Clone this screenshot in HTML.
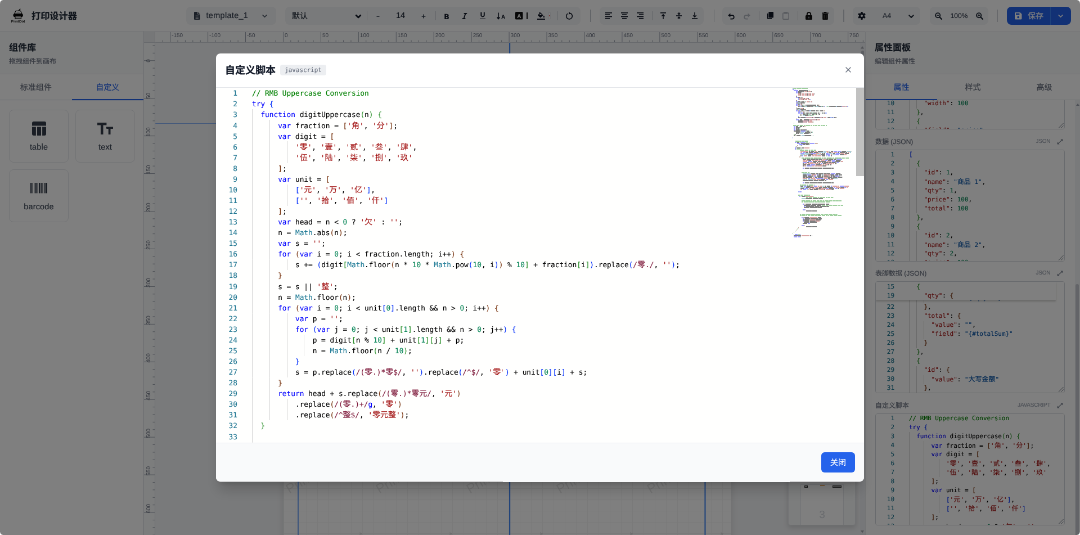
<!DOCTYPE html><html lang="zh-CN"><head><meta charset="utf-8"><title>打印设计器</title><style>
*{box-sizing:border-box;margin:0;padding:0}
html,body{width:1080px;height:535px;overflow:hidden;background:#fff}
body{font-family:"Liberation Sans","Noto Sans CJK SC",sans-serif;color:#1f2937;-webkit-text-stroke:.2px;text-rendering:geometricPrecision}
#root{will-change:transform;position:absolute;left:0;top:0;width:1920px;height:951px;transform:scale(.5625);transform-origin:0 0;overflow:hidden;border-radius:6.5px;background:#fff}
.abs{position:absolute}
.c{position:absolute;display:flex;align-items:center;justify-content:center;white-space:nowrap}
.l{position:absolute;display:flex;align-items:center;white-space:nowrap}
header{position:absolute;left:0;top:0;width:1920px;height:56px;background:#fff;border-bottom:1px solid #e5e7eb}
.pill{position:absolute;top:12px;height:32px;background:#f3f4f6;border-radius:8px}
.sep{position:absolute;width:1px;background:#d1d5db}
.ic{position:absolute;display:block;overflow:visible}
#left{position:absolute;left:0;top:56px;width:256px;height:895px;background:#fff;border-right:1px solid #e5e7eb}
#right{position:absolute;left:1538px;top:56px;width:382px;height:895px;background:#fff;border-left:1px solid #e5e7eb;overflow:hidden}
.ph{position:absolute;left:0;top:0;right:0;height:76px;background:#f9fafb;border-bottom:1px solid #e5e7eb}
.ph h2{position:absolute;left:16px;top:18px;font-size:16px;line-height:24px;font-weight:700;color:#1f2937}
.ph p{position:absolute;left:16px;top:45px;font-size:12px;line-height:16px;color:#6b7280}
.tabs{position:absolute;left:0;right:0;top:76px;height:46px;border-bottom:1px solid #e5e7eb;display:flex}
.tabs div{flex:1;display:flex;align-items:center;justify-content:center;font-size:14px;color:#6b7280;border-bottom:2px solid transparent;margin-bottom:-1px;padding-top:1px}
.tabs div.on{color:#2563eb;border-bottom-color:#2563eb}
.card{position:absolute;width:106px;height:94px;border:1px solid #e5e7eb;border-radius:8px;background:#fff}
.card span{position:absolute;left:0;right:0;text-align:center;font-size:14.4px;letter-spacing:.2px;line-height:20px;color:#414b5a}
#canvas{position:absolute;left:256px;top:56px;width:1282px;height:895px;background:#f3f4f6;overflow:hidden}
.ed{-webkit-text-stroke:.16px;position:absolute;background:#fffffe;overflow:hidden;font-family:"DejaVu Sans Mono","Noto Sans CJK SC",monospace;color:#000}
.ed .ln{position:absolute;left:0;white-space:pre}
.ed .no{position:absolute;text-align:right;color:#237893;white-space:pre}
.ed b{font-weight:400}
.big{font-size:12.79px}
.big .ln,.big .no{height:19px;line-height:19px}
.big b{font-size:14px;line-height:19px}
.sm{font-size:10.96px}
.sm .ln,.sm .no{height:16px;line-height:16px}
.sm b{font-size:12px;line-height:16px}
.g{position:absolute;width:1px;background:#d3d3d3}
.box{position:absolute;left:17px;width:337px;height:198.5px;border:1px solid #d1d5db;border-radius:4px;overflow:hidden;background:#fff}
.lab{position:absolute;left:17px;font-size:12px;line-height:16px;color:#6b7280;white-space:nowrap}
.lang{position:absolute;font-size:10px;line-height:16px;color:#9ca3af;text-align:right;white-space:nowrap;letter-spacing:-.2px}
</style></head><body><div id="root">
<header>
<svg class="ic" style="left:16.0px;top:12.0px" width="32" height="32" viewBox="0 0 32 32" >
<path d="M16.6 8 L19.8 4" stroke="#111" stroke-width="1.5" stroke-linecap="round"/>
<path d="M11.9 7.4 H20.6 L23 12.6 H9.6Z" fill="#fff" stroke="#111" stroke-width="1.15" stroke-linejoin="round"/>
<path d="M13.6 10 H18.8" stroke="#999" stroke-width="1"/>
<rect x="7.5" y="12.2" width="17.4" height="5.8" rx="2.8" fill="#0a0a0a"/>
<rect x="10.9" y="16.6" width="10.6" height="4.6" fill="#ccc" stroke="#111" stroke-width="1.2"/>
<text x="16" y="27.8" font-size="6.3" font-weight="700" text-anchor="middle" font-family="Liberation Sans,sans-serif" fill="#111" textLength="24.5" lengthAdjust="spacingAndGlyphs">PrintDot</text>
</svg>
<div class="l" style="left:56px;top:12.5px;height:28px;font-size:16.2px;font-weight:700;color:#1f2937;letter-spacing:0">打印设计器</div>
<div class="pill" style="left:330.5px;width:160.0px"></div>
<div class="pill" style="left:507.0px;width:524.6px"></div>
<div class="pill" style="left:1065.8px;width:185.3px"></div>
<div class="pill" style="left:1284.4px;width:198.7px"></div>
<div class="pill" style="left:1516.3px;width:120.0px"></div>
<div class="pill" style="left:1653.0px;width:103.8px"></div>
<div class="sep" style="left:1049.3px;top:17px;height:22px;width:1.4px;background:#c6cad1"></div>
<div class="sep" style="left:1268.7px;top:17px;height:22px;width:1.4px;background:#c6cad1"></div>
<div class="sep" style="left:1499.4px;top:17px;height:22px;width:1.4px;background:#c6cad1"></div>
<div class="sep" style="left:1772.8px;top:17px;height:22px;width:1.4px;background:#c6cad1"></div>
<div class="sep" style="left:651.8px;top:20px;height:16px;width:1.3px;background:#c9cdd4"></div>
<div class="sep" style="left:773.6px;top:20px;height:16px;width:1.3px;background:#c9cdd4"></div>
<div class="sep" style="left:990.5px;top:20px;height:16px;width:1.3px;background:#c9cdd4"></div>
<div class="sep" style="left:1158.5px;top:20px;height:16px;width:1.3px;background:#c9cdd4"></div>
<div class="sep" style="left:1348.8px;top:20px;height:16px;width:1.3px;background:#c9cdd4"></div>
<div class="sep" style="left:1417.6px;top:20px;height:16px;width:1.3px;background:#c9cdd4"></div>
<svg class="ic" style="left:344.9px;top:21.0px" width="10.5" height="14" viewBox="0 0 10.5 14" ><path d="M1.3 0 H6.4 L10.5 4.1 V12.7 A1.3 1.3 0 0 1 9.2 14 H1.3 A1.3 1.3 0 0 1 0 12.7 V1.3 A1.3 1.3 0 0 1 1.3 0Z" fill="#374151"/><path d="M6.4 0 V4.1 H10.5" fill="none" stroke="#f3f4f6" stroke-width=".9"/><path d="M2.6 7.2 H7.9 M2.6 9.4 H7.9 M2.6 11.5 H7.9" stroke="#f3f4f6" stroke-width=".9"/></svg>
<div class="l" style="left:366.5px;top:12px;height:32px;font-size:14.4px;letter-spacing:.35px;color:#374151">template_1</div>
<svg class="ic" style="left:466.1px;top:24.0px" width="9" height="9" viewBox="0 0 8 8" ><path d="M1 2.6 L4 5.6 L7 2.6" fill="none" stroke="#4b5563" stroke-width="1.4" stroke-linecap="round" stroke-linejoin="round"/></svg>
<div class="l" style="left:519px;top:12px;height:32px;font-size:14px;color:#1f2937">默认</div>
<svg class="ic" style="left:631.8px;top:23.5px" width="10" height="10" viewBox="0 0 8 8" ><path d="M1 2.6 L4 5.6 L7 2.6" fill="none" stroke="#111827" stroke-width="2.2" stroke-linecap="round" stroke-linejoin="round"/></svg>
<svg class="ic" style="left:669.4px;top:28.0px" width="6" height="2" viewBox="0 0 6 2" ><rect width="5" height="1.7" x=".5" fill="#374151"/></svg>
<div class="c" style="left:692px;width:40px;top:12px;height:32px;font-size:14.5px;color:#1f2937">14</div>
<svg class="ic" style="left:749.1px;top:24.5px" width="8" height="8" viewBox="0 0 8 8" ><path d="M4 .6 V7.4 M.6 4 H7.4" stroke="#374151" stroke-width="1.6"/></svg>
<div class="c" style="left:784px;width:20px;top:13.2px;height:32px;font-size:12.5px;font-weight:700;color:#111827;font-family:'DejaVu Sans',sans-serif">B</div>
<svg class="ic" style="left:820.6px;top:22.5px" width="10" height="11" viewBox="0 0 10 11" ><path d="M3.6 .9 H9.2 M.8 10.1 H6.4 M6.5 .9 L3.5 10.1" fill="none" stroke="#111827" stroke-width="1.8"/></svg>
<div class="c" style="left:848px;width:20px;top:11px;height:32px;font-size:12px;font-weight:700;color:#111827"><span style="border-bottom:1.6px solid #111827;line-height:11px;padding:0 .5px 1px">U</span></div>
<svg class="ic" style="left:882.5px;top:21.5px" width="16" height="13" viewBox="0 0 16 13" ><path d="M3 0.6 V11.4 M0.6 8.4 L3 11.7 L5.4 8.4" fill="none" stroke="#111827" stroke-width="1.6" stroke-linejoin="round"/><text x="11.6" y="10.6" font-size="9.3" font-weight="700" text-anchor="middle" font-family="Liberation Sans,sans-serif" fill="#111827" stroke="#111827" stroke-width=".3">A</text></svg>
<svg class="ic" style="left:916.2px;top:21.2px" width="13.5" height="13.5" viewBox="0 0 13.5 13.5" ><rect width="13.5" height="13.5" rx="1.6" fill="#111"/><text x="6.75" y="10.6" font-size="10" font-weight="700" text-anchor="middle" font-family="Liberation Sans,sans-serif" fill="#fff">A</text></svg>
<div class="abs" style="left:935.9px;top:21.6px;width:2.4px;height:12.8px;background:#111;border-radius:.5px"></div>
<svg class="ic" style="left:955.0px;top:21.0px" width="14" height="14" viewBox="0 0 14 14" ><path d="M5.6 1 L10.6 6 L6.4 10.1 A1 1 0 0 1 5 10.1 L1.6 6.7 A1 1 0 0 1 1.6 5.3Z" fill="#111827"/><path d="M3.4 0.8 L6.6 4" stroke="#111827" stroke-width="1.2" fill="none"/><path d="M3.3 6 H8.6 L5.7 3.2Z" fill="#f3f4f6"/><path d="M11.9 6.6 C12.6 7.7 13.1 8.4 13.1 9.1 A1.2 1.2 0 0 1 10.7 9.1 C10.7 8.4 11.2 7.7 11.9 6.6Z" fill="#111827"/><rect x="0" y="12.2" width="14" height="1.8" fill="#111827"/></svg>
<div class="abs" style="left:975.3px;top:21.6px;width:3.4px;height:12.8px;background:#fff;border:.5px solid #e5e7eb"></div><div class="abs" style="left:976.2px;top:27.2px;width:1.8px;height:1.8px;border-radius:1px;background:#ef4444"></div>
<svg class="ic" style="left:1004.6px;top:21.0px" width="14" height="14" viewBox="0 -.5 14 14" ><path d="M4.3 2.6 A5.3 5.3 0 1 0 8.6 2.1" fill="none" stroke="#111827" stroke-width="1.6"/><path d="M6.6 -.4 L9.6 2.4 L5.9 4.2Z" fill="#111827"/></svg>
<svg class="ic" style="left:1076.2px;top:22.2px" width="12" height="11.6" viewBox="0 0 12 11.6" ><rect x="0" y="0" width="12" height="1.7" fill="#111827"/><rect x="0" y="3.3" width="8" height="1.7" fill="#111827"/><rect x="0" y="6.6" width="12" height="1.7" fill="#111827"/><rect x="0" y="9.9" width="8" height="1.7" fill="#111827"/></svg>
<svg class="ic" style="left:1104.2px;top:22.2px" width="12" height="11.6" viewBox="0 0 12 11.6" ><rect x="0" y="0" width="12" height="1.7" fill="#111827"/><rect x="2" y="3.3" width="8" height="1.7" fill="#111827"/><rect x="0" y="6.6" width="12" height="1.7" fill="#111827"/><rect x="2" y="9.9" width="8" height="1.7" fill="#111827"/></svg>
<svg class="ic" style="left:1131.8px;top:22.2px" width="12" height="11.6" viewBox="0 0 12 11.6" ><rect x="0" y="0" width="12" height="1.7" fill="#111827"/><rect x="4" y="3.3" width="8" height="1.7" fill="#111827"/><rect x="0" y="6.6" width="12" height="1.7" fill="#111827"/><rect x="4" y="9.9" width="8" height="1.7" fill="#111827"/></svg>
<svg class="ic" style="left:1172.7px;top:22.0px" width="12" height="12" viewBox="0 0 12 12" ><rect x="1" y="0" width="10" height="1.7" fill="#111827"/><path d="M6 12 V4 M3.2 6.8 L6 3.9 L8.8 6.8" fill="none" stroke="#111827" stroke-width="1.5"/></svg>
<svg class="ic" style="left:1201.1px;top:22.0px" width="12" height="12" viewBox="0 0 12 12" ><rect x="1" y="5.2" width="10" height="1.6" fill="#111827"/><path d="M6 0 V3.6 M3.8 1.6 L6 3.9 L8.2 1.6 M6 12 V8.4 M3.8 10.4 L6 8.1 L8.2 10.4" fill="none" stroke="#111827" stroke-width="1.4"/></svg>
<svg class="ic" style="left:1228.7px;top:22.0px" width="12" height="12" viewBox="0 0 12 12" ><rect x="1" y="10.3" width="10" height="1.7" fill="#111827"/><path d="M6 0 V8 M3.2 5.2 L6 8.1 L8.8 5.2" fill="none" stroke="#111827" stroke-width="1.5"/></svg>
<svg class="ic" style="left:1294.0px;top:22.5px" width="12" height="11" viewBox="0 0 12 11" ><g ><path d="M3.2 4.2 H7.6 A3.2 3.2 0 0 1 7.6 10.6 H4.4" fill="none" stroke="#111827" stroke-width="1.7"/><path d="M4.4 0.6 V7.8 L0.2 4.2Z" fill="#111827"/></g></svg>
<svg class="ic" style="left:1322.0px;top:22.5px" width="12" height="11" viewBox="0 0 12 11" ><g transform="translate(12 0) scale(-1 1)"><path d="M3.2 4.2 H7.6 A3.2 3.2 0 0 1 7.6 10.6 H4.4" fill="none" stroke="#b3b8c1" stroke-width="1.7"/><path d="M4.4 0.6 V7.8 L0.2 4.2Z" fill="#b3b8c1"/></g></svg>
<svg class="ic" style="left:1362.9px;top:21.0px" width="12" height="14" viewBox="0 0 12 14" ><rect x="3.4" y="0" width="8.6" height="10.6" rx="1.3" fill="#111827"/><path d="M1.7 3 V11.6 A.6 .6 0 0 0 2.3 12.2 H9" fill="none" stroke="#111827" stroke-width="1.7"/></svg>
<svg class="ic" style="left:1390.9px;top:21.0px" width="12" height="14" viewBox="0 0 12 14" ><rect x=".8" y="2" width="10.4" height="11.2" rx="1.2" fill="none" stroke="#aeb3bc" stroke-width="1.5"/><rect x="3" y=".2" width="6" height="3.4" rx=".9" fill="#aeb3bc"/></svg>
<svg class="ic" style="left:1432.2px;top:21.0px" width="12" height="14" viewBox="0 0 12 14" ><path d="M2.8 6.4 V4.2 A3.2 3.2 0 0 1 9.2 4.2 V6.4" fill="none" stroke="#111" stroke-width="1.9"/><rect x="0" y="6" width="12" height="8" rx="1.5" fill="#111"/><circle cx="6" cy="9.6" r="1.1" fill="#9ca3af"/><rect x="5.5" y="9.8" width="1" height="2.2" fill="#9ca3af"/></svg>
<svg class="ic" style="left:1461.1px;top:21.0px" width="12" height="14" viewBox="0 0 12 14" ><path d="M0 2.3 H12 M4 2 L4.6 .7 H7.4 L8 2" stroke="#111" stroke-width="1.6" fill="none"/><path d="M1.2 3.6 H10.8 V12.9 A1.1 1.1 0 0 1 9.7 14 H2.3 A1.1 1.1 0 0 1 1.2 12.9Z" fill="#111"/><path d="M4.2 5.6 V12 M7.8 5.6 V12" stroke="#666" stroke-width="1"/></svg>
<svg class="ic" style="left:1525.0px;top:21.0px" width="14" height="14" viewBox="0 0 14 14" ><g transform="translate(7 7)"><rect x="-1.7" y="-7" width="3.4" height="14" rx=".8" fill="#111827" transform="rotate(0)"/><rect x="-1.7" y="-7" width="3.4" height="14" rx=".8" fill="#111827" transform="rotate(60)"/><rect x="-1.7" y="-7" width="3.4" height="14" rx=".8" fill="#111827" transform="rotate(120)"/><circle r="5" fill="#111827"/><circle r="2.1" fill="#f3f4f6"/></g></svg>
<div class="l" style="left:1569px;top:12px;height:32px;font-size:12.5px;color:#4b5563">A4</div>
<svg class="ic" style="left:1615.0px;top:23.5px" width="10" height="10" viewBox="0 0 8 8" ><path d="M1 2.6 L4 5.6 L7 2.6" fill="none" stroke="#1f2937" stroke-width="1.6" stroke-linecap="round" stroke-linejoin="round"/></svg>
<svg class="ic" style="left:1661.8px;top:21.5px" width="13" height="13" viewBox="0 0 13 13" ><circle cx="5.2" cy="5.2" r="4.1" fill="none" stroke="#1f2937" stroke-width="1.9"/><path d="M8.4 8.4 L12 12" stroke="#1f2937" stroke-width="2.2" stroke-linecap="round"/><path d="M3.2 5.2 H7.2" stroke="#1f2937" stroke-width="1.3"/></svg>
<div class="c" style="left:1685px;width:40px;top:12px;height:32px;font-size:12px;color:#374151">100%</div>
<svg class="ic" style="left:1734.5px;top:21.5px" width="13" height="13" viewBox="0 0 13 13" ><circle cx="5.2" cy="5.2" r="4.1" fill="none" stroke="#1f2937" stroke-width="1.9"/><path d="M8.4 8.4 L12 12" stroke="#1f2937" stroke-width="2.2" stroke-linecap="round"/><path d="M3.2 5.2 H7.2" stroke="#1f2937" stroke-width="1.3"/><path d="M5.2 3.2 V7.2" stroke="#1f2937" stroke-width="1.3"/></svg>
<div class="abs" style="left:1790.4px;top:12px;width:113.8px;height:32px;background:#2563eb;border-radius:8px"></div>
<div class="abs" style="left:1867px;top:12px;width:1px;height:32px;background:#3b82f6"></div>
<svg class="ic" style="left:1803.8px;top:21.8px" width="12.5" height="12.5" viewBox="0 0 12.5 12.5" ><path d="M1.4 0 H9.4 L12.5 3.1 V11.1 A1.4 1.4 0 0 1 11.1 12.5 H1.4 A1.4 1.4 0 0 1 0 11.1 V1.4 A1.4 1.4 0 0 1 1.4 0Z" fill="#fff"/><rect x="2" y="1.6" width="6.4" height="3" fill="#2563eb"/><circle cx="6.2" cy="8.4" r="1.9" fill="#2563eb"/></svg>
<div class="l" style="left:1827px;top:12px;height:32px;font-size:14px;color:#fff">保存</div>
<svg class="ic" style="left:1880.7px;top:24.0px" width="9" height="9" viewBox="0 0 8 8" ><path d="M1 2.6 L4 5.6 L7 2.6" fill="none" stroke="#fff" stroke-width="1.4" stroke-linecap="round" stroke-linejoin="round"/></svg>
</header>
<div id="left"><div class="ph"><h2>组件库</h2><p>拖拽组件到画布</p></div>
<div class="tabs"><div>标准组件</div><div class="on">自定义</div></div>
<div class="card" style="left:16px;top:139px"><svg class="ic" style="left:39.5px;top:20.0px" width="25" height="25" viewBox="0 0 25 25" ><path d="M3 0 H22 A3 3 0 0 1 25 3 V7.6 H0 V3 A3 3 0 0 1 3 0Z" fill="#343d4a"/><path d="M0 9.6 H6.9 V25 H3 A3 3 0 0 1 0 22Z M9 9.6 H16 V25 H9Z M18.1 9.6 H25 V22 A3 3 0 0 1 22 25 H18.1Z" fill="#343d4a"/></svg><span style="top:56px">table</span></div>
<div class="card" style="left:134px;top:139px"><svg class="ic" style="left:38.0px;top:21.5px" width="28" height="21" viewBox="0 0 28 21" ><path d="M0 0 H16.4 V4.4 H10.5 V21 H5.9 V4.4 H0Z" fill="#343d4a"/><path d="M15.2 7.4 H28 V11 H23.5 V21 H19.7 V11 H16.4Z" fill="#343d4a"/></svg><span style="top:56px">text</span></div>
<div class="card" style="left:16px;top:244.5px"><svg class="ic" style="left:37.0px;top:23.8px" width="30" height="18.5" viewBox="0 0 30 18.5" ><rect x="0" y="0" width="2.4" height="18.5" fill="#343d4a"/><rect x="3.6" y="0" width="1.2" height="18.5" fill="#343d4a"/><rect x="6" y="0" width="1.2" height="18.5" fill="#343d4a"/><rect x="8.6" y="0" width="2.6" height="18.5" fill="#343d4a"/><rect x="12.6" y="0" width="1.2" height="18.5" fill="#343d4a"/><rect x="15" y="0" width="2.6" height="18.5" fill="#343d4a"/><rect x="18.8" y="0" width="1.2" height="18.5" fill="#343d4a"/><rect x="21.4" y="0" width="1.2" height="18.5" fill="#343d4a"/><rect x="24" y="0" width="1.4" height="18.5" fill="#343d4a"/><rect x="26.6" y="0" width="3.4" height="18.5" fill="#343d4a"/></svg><span style="top:56px">barcode</span></div>
</div>
<div id="canvas">
<div class="abs" style="left:20px;top:20px;right:0;bottom:0;overflow:hidden">
<div class="abs" style="left:227.5px;top:31.7px;width:796.6px;height:1126.6px;background:#fff;box-shadow:0 4px 12px rgba(0,0,0,.12);overflow:hidden;background-image:linear-gradient(to right,#f4f4f4 1px,transparent 1px),linear-gradient(to bottom,#f4f4f4 1px,transparent 1px);background-size:20px 20px">
<div class="abs" style="left:-150.1px;top:-49.4px;font-size:24px;color:rgba(0,0,0,.095);transform-origin:0 78%;transform:rotate(-30deg);white-space:nowrap;line-height:25px;-webkit-text-stroke:0">PrintDot</div>
<div class="abs" style="left:10.4px;top:-49.4px;font-size:24px;color:rgba(0,0,0,.095);transform-origin:0 78%;transform:rotate(-30deg);white-space:nowrap;line-height:25px;-webkit-text-stroke:0">PrintDot</div>
<div class="abs" style="left:170.9px;top:-49.4px;font-size:24px;color:rgba(0,0,0,.095);transform-origin:0 78%;transform:rotate(-30deg);white-space:nowrap;line-height:25px;-webkit-text-stroke:0">PrintDot</div>
<div class="abs" style="left:331.4px;top:-49.4px;font-size:24px;color:rgba(0,0,0,.095);transform-origin:0 78%;transform:rotate(-30deg);white-space:nowrap;line-height:25px;-webkit-text-stroke:0">PrintDot</div>
<div class="abs" style="left:491.9px;top:-49.4px;font-size:24px;color:rgba(0,0,0,.095);transform-origin:0 78%;transform:rotate(-30deg);white-space:nowrap;line-height:25px;-webkit-text-stroke:0">PrintDot</div>
<div class="abs" style="left:652.4px;top:-49.4px;font-size:24px;color:rgba(0,0,0,.095);transform-origin:0 78%;transform:rotate(-30deg);white-space:nowrap;line-height:25px;-webkit-text-stroke:0">PrintDot</div>
<div class="abs" style="left:812.9px;top:-49.4px;font-size:24px;color:rgba(0,0,0,.095);transform-origin:0 78%;transform:rotate(-30deg);white-space:nowrap;line-height:25px;-webkit-text-stroke:0">PrintDot</div>
<div class="abs" style="left:-150.1px;top:110.6px;font-size:24px;color:rgba(0,0,0,.095);transform-origin:0 78%;transform:rotate(-30deg);white-space:nowrap;line-height:25px;-webkit-text-stroke:0">PrintDot</div>
<div class="abs" style="left:10.4px;top:110.6px;font-size:24px;color:rgba(0,0,0,.095);transform-origin:0 78%;transform:rotate(-30deg);white-space:nowrap;line-height:25px;-webkit-text-stroke:0">PrintDot</div>
<div class="abs" style="left:170.9px;top:110.6px;font-size:24px;color:rgba(0,0,0,.095);transform-origin:0 78%;transform:rotate(-30deg);white-space:nowrap;line-height:25px;-webkit-text-stroke:0">PrintDot</div>
<div class="abs" style="left:331.4px;top:110.6px;font-size:24px;color:rgba(0,0,0,.095);transform-origin:0 78%;transform:rotate(-30deg);white-space:nowrap;line-height:25px;-webkit-text-stroke:0">PrintDot</div>
<div class="abs" style="left:491.9px;top:110.6px;font-size:24px;color:rgba(0,0,0,.095);transform-origin:0 78%;transform:rotate(-30deg);white-space:nowrap;line-height:25px;-webkit-text-stroke:0">PrintDot</div>
<div class="abs" style="left:652.4px;top:110.6px;font-size:24px;color:rgba(0,0,0,.095);transform-origin:0 78%;transform:rotate(-30deg);white-space:nowrap;line-height:25px;-webkit-text-stroke:0">PrintDot</div>
<div class="abs" style="left:812.9px;top:110.6px;font-size:24px;color:rgba(0,0,0,.095);transform-origin:0 78%;transform:rotate(-30deg);white-space:nowrap;line-height:25px;-webkit-text-stroke:0">PrintDot</div>
<div class="abs" style="left:-150.1px;top:270.6px;font-size:24px;color:rgba(0,0,0,.095);transform-origin:0 78%;transform:rotate(-30deg);white-space:nowrap;line-height:25px;-webkit-text-stroke:0">PrintDot</div>
<div class="abs" style="left:10.4px;top:270.6px;font-size:24px;color:rgba(0,0,0,.095);transform-origin:0 78%;transform:rotate(-30deg);white-space:nowrap;line-height:25px;-webkit-text-stroke:0">PrintDot</div>
<div class="abs" style="left:170.9px;top:270.6px;font-size:24px;color:rgba(0,0,0,.095);transform-origin:0 78%;transform:rotate(-30deg);white-space:nowrap;line-height:25px;-webkit-text-stroke:0">PrintDot</div>
<div class="abs" style="left:331.4px;top:270.6px;font-size:24px;color:rgba(0,0,0,.095);transform-origin:0 78%;transform:rotate(-30deg);white-space:nowrap;line-height:25px;-webkit-text-stroke:0">PrintDot</div>
<div class="abs" style="left:491.9px;top:270.6px;font-size:24px;color:rgba(0,0,0,.095);transform-origin:0 78%;transform:rotate(-30deg);white-space:nowrap;line-height:25px;-webkit-text-stroke:0">PrintDot</div>
<div class="abs" style="left:652.4px;top:270.6px;font-size:24px;color:rgba(0,0,0,.095);transform-origin:0 78%;transform:rotate(-30deg);white-space:nowrap;line-height:25px;-webkit-text-stroke:0">PrintDot</div>
<div class="abs" style="left:812.9px;top:270.6px;font-size:24px;color:rgba(0,0,0,.095);transform-origin:0 78%;transform:rotate(-30deg);white-space:nowrap;line-height:25px;-webkit-text-stroke:0">PrintDot</div>
<div class="abs" style="left:-150.1px;top:430.6px;font-size:24px;color:rgba(0,0,0,.095);transform-origin:0 78%;transform:rotate(-30deg);white-space:nowrap;line-height:25px;-webkit-text-stroke:0">PrintDot</div>
<div class="abs" style="left:10.4px;top:430.6px;font-size:24px;color:rgba(0,0,0,.095);transform-origin:0 78%;transform:rotate(-30deg);white-space:nowrap;line-height:25px;-webkit-text-stroke:0">PrintDot</div>
<div class="abs" style="left:170.9px;top:430.6px;font-size:24px;color:rgba(0,0,0,.095);transform-origin:0 78%;transform:rotate(-30deg);white-space:nowrap;line-height:25px;-webkit-text-stroke:0">PrintDot</div>
<div class="abs" style="left:331.4px;top:430.6px;font-size:24px;color:rgba(0,0,0,.095);transform-origin:0 78%;transform:rotate(-30deg);white-space:nowrap;line-height:25px;-webkit-text-stroke:0">PrintDot</div>
<div class="abs" style="left:491.9px;top:430.6px;font-size:24px;color:rgba(0,0,0,.095);transform-origin:0 78%;transform:rotate(-30deg);white-space:nowrap;line-height:25px;-webkit-text-stroke:0">PrintDot</div>
<div class="abs" style="left:652.4px;top:430.6px;font-size:24px;color:rgba(0,0,0,.095);transform-origin:0 78%;transform:rotate(-30deg);white-space:nowrap;line-height:25px;-webkit-text-stroke:0">PrintDot</div>
<div class="abs" style="left:812.9px;top:430.6px;font-size:24px;color:rgba(0,0,0,.095);transform-origin:0 78%;transform:rotate(-30deg);white-space:nowrap;line-height:25px;-webkit-text-stroke:0">PrintDot</div>
<div class="abs" style="left:-150.1px;top:590.6px;font-size:24px;color:rgba(0,0,0,.095);transform-origin:0 78%;transform:rotate(-30deg);white-space:nowrap;line-height:25px;-webkit-text-stroke:0">PrintDot</div>
<div class="abs" style="left:10.4px;top:590.6px;font-size:24px;color:rgba(0,0,0,.095);transform-origin:0 78%;transform:rotate(-30deg);white-space:nowrap;line-height:25px;-webkit-text-stroke:0">PrintDot</div>
<div class="abs" style="left:170.9px;top:590.6px;font-size:24px;color:rgba(0,0,0,.095);transform-origin:0 78%;transform:rotate(-30deg);white-space:nowrap;line-height:25px;-webkit-text-stroke:0">PrintDot</div>
<div class="abs" style="left:331.4px;top:590.6px;font-size:24px;color:rgba(0,0,0,.095);transform-origin:0 78%;transform:rotate(-30deg);white-space:nowrap;line-height:25px;-webkit-text-stroke:0">PrintDot</div>
<div class="abs" style="left:491.9px;top:590.6px;font-size:24px;color:rgba(0,0,0,.095);transform-origin:0 78%;transform:rotate(-30deg);white-space:nowrap;line-height:25px;-webkit-text-stroke:0">PrintDot</div>
<div class="abs" style="left:652.4px;top:590.6px;font-size:24px;color:rgba(0,0,0,.095);transform-origin:0 78%;transform:rotate(-30deg);white-space:nowrap;line-height:25px;-webkit-text-stroke:0">PrintDot</div>
<div class="abs" style="left:812.9px;top:590.6px;font-size:24px;color:rgba(0,0,0,.095);transform-origin:0 78%;transform:rotate(-30deg);white-space:nowrap;line-height:25px;-webkit-text-stroke:0">PrintDot</div>
<div class="abs" style="left:-150.1px;top:750.6px;font-size:24px;color:rgba(0,0,0,.095);transform-origin:0 78%;transform:rotate(-30deg);white-space:nowrap;line-height:25px;-webkit-text-stroke:0">PrintDot</div>
<div class="abs" style="left:10.4px;top:750.6px;font-size:24px;color:rgba(0,0,0,.095);transform-origin:0 78%;transform:rotate(-30deg);white-space:nowrap;line-height:25px;-webkit-text-stroke:0">PrintDot</div>
<div class="abs" style="left:170.9px;top:750.6px;font-size:24px;color:rgba(0,0,0,.095);transform-origin:0 78%;transform:rotate(-30deg);white-space:nowrap;line-height:25px;-webkit-text-stroke:0">PrintDot</div>
<div class="abs" style="left:331.4px;top:750.6px;font-size:24px;color:rgba(0,0,0,.095);transform-origin:0 78%;transform:rotate(-30deg);white-space:nowrap;line-height:25px;-webkit-text-stroke:0">PrintDot</div>
<div class="abs" style="left:491.9px;top:750.6px;font-size:24px;color:rgba(0,0,0,.095);transform-origin:0 78%;transform:rotate(-30deg);white-space:nowrap;line-height:25px;-webkit-text-stroke:0">PrintDot</div>
<div class="abs" style="left:652.4px;top:750.6px;font-size:24px;color:rgba(0,0,0,.095);transform-origin:0 78%;transform:rotate(-30deg);white-space:nowrap;line-height:25px;-webkit-text-stroke:0">PrintDot</div>
<div class="abs" style="left:812.9px;top:750.6px;font-size:24px;color:rgba(0,0,0,.095);transform-origin:0 78%;transform:rotate(-30deg);white-space:nowrap;line-height:25px;-webkit-text-stroke:0">PrintDot</div>
<div class="abs" style="left:-150.1px;top:910.6px;font-size:24px;color:rgba(0,0,0,.095);transform-origin:0 78%;transform:rotate(-30deg);white-space:nowrap;line-height:25px;-webkit-text-stroke:0">PrintDot</div>
<div class="abs" style="left:10.4px;top:910.6px;font-size:24px;color:rgba(0,0,0,.095);transform-origin:0 78%;transform:rotate(-30deg);white-space:nowrap;line-height:25px;-webkit-text-stroke:0">PrintDot</div>
<div class="abs" style="left:170.9px;top:910.6px;font-size:24px;color:rgba(0,0,0,.095);transform-origin:0 78%;transform:rotate(-30deg);white-space:nowrap;line-height:25px;-webkit-text-stroke:0">PrintDot</div>
<div class="abs" style="left:331.4px;top:910.6px;font-size:24px;color:rgba(0,0,0,.095);transform-origin:0 78%;transform:rotate(-30deg);white-space:nowrap;line-height:25px;-webkit-text-stroke:0">PrintDot</div>
<div class="abs" style="left:491.9px;top:910.6px;font-size:24px;color:rgba(0,0,0,.095);transform-origin:0 78%;transform:rotate(-30deg);white-space:nowrap;line-height:25px;-webkit-text-stroke:0">PrintDot</div>
<div class="abs" style="left:652.4px;top:910.6px;font-size:24px;color:rgba(0,0,0,.095);transform-origin:0 78%;transform:rotate(-30deg);white-space:nowrap;line-height:25px;-webkit-text-stroke:0">PrintDot</div>
<div class="abs" style="left:812.9px;top:910.6px;font-size:24px;color:rgba(0,0,0,.095);transform-origin:0 78%;transform:rotate(-30deg);white-space:nowrap;line-height:25px;-webkit-text-stroke:0">PrintDot</div>
<div class="abs" style="left:-150.1px;top:1070.6px;font-size:24px;color:rgba(0,0,0,.095);transform-origin:0 78%;transform:rotate(-30deg);white-space:nowrap;line-height:25px;-webkit-text-stroke:0">PrintDot</div>
<div class="abs" style="left:10.4px;top:1070.6px;font-size:24px;color:rgba(0,0,0,.095);transform-origin:0 78%;transform:rotate(-30deg);white-space:nowrap;line-height:25px;-webkit-text-stroke:0">PrintDot</div>
<div class="abs" style="left:170.9px;top:1070.6px;font-size:24px;color:rgba(0,0,0,.095);transform-origin:0 78%;transform:rotate(-30deg);white-space:nowrap;line-height:25px;-webkit-text-stroke:0">PrintDot</div>
<div class="abs" style="left:331.4px;top:1070.6px;font-size:24px;color:rgba(0,0,0,.095);transform-origin:0 78%;transform:rotate(-30deg);white-space:nowrap;line-height:25px;-webkit-text-stroke:0">PrintDot</div>
<div class="abs" style="left:491.9px;top:1070.6px;font-size:24px;color:rgba(0,0,0,.095);transform-origin:0 78%;transform:rotate(-30deg);white-space:nowrap;line-height:25px;-webkit-text-stroke:0">PrintDot</div>
<div class="abs" style="left:652.4px;top:1070.6px;font-size:24px;color:rgba(0,0,0,.095);transform-origin:0 78%;transform:rotate(-30deg);white-space:nowrap;line-height:25px;-webkit-text-stroke:0">PrintDot</div>
<div class="abs" style="left:812.9px;top:1070.6px;font-size:24px;color:rgba(0,0,0,.095);transform-origin:0 78%;transform:rotate(-30deg);white-space:nowrap;line-height:25px;-webkit-text-stroke:0">PrintDot</div>
<div class="abs" style="left:-89.1px;top:73.6px;font-size:24px;color:rgba(0,0,0,.095);transform-origin:0 78%;transform:rotate(-30deg);white-space:nowrap;line-height:25px;-webkit-text-stroke:0">PrintDot</div>
<div class="abs" style="left:71.4px;top:73.6px;font-size:24px;color:rgba(0,0,0,.095);transform-origin:0 78%;transform:rotate(-30deg);white-space:nowrap;line-height:25px;-webkit-text-stroke:0">PrintDot</div>
<div class="abs" style="left:231.9px;top:73.6px;font-size:24px;color:rgba(0,0,0,.095);transform-origin:0 78%;transform:rotate(-30deg);white-space:nowrap;line-height:25px;-webkit-text-stroke:0">PrintDot</div>
<div class="abs" style="left:392.4px;top:73.6px;font-size:24px;color:rgba(0,0,0,.095);transform-origin:0 78%;transform:rotate(-30deg);white-space:nowrap;line-height:25px;-webkit-text-stroke:0">PrintDot</div>
<div class="abs" style="left:552.9px;top:73.6px;font-size:24px;color:rgba(0,0,0,.095);transform-origin:0 78%;transform:rotate(-30deg);white-space:nowrap;line-height:25px;-webkit-text-stroke:0">PrintDot</div>
<div class="abs" style="left:713.4px;top:73.6px;font-size:24px;color:rgba(0,0,0,.095);transform-origin:0 78%;transform:rotate(-30deg);white-space:nowrap;line-height:25px;-webkit-text-stroke:0">PrintDot</div>
<div class="abs" style="left:873.9px;top:73.6px;font-size:24px;color:rgba(0,0,0,.095);transform-origin:0 78%;transform:rotate(-30deg);white-space:nowrap;line-height:25px;-webkit-text-stroke:0">PrintDot</div>
<div class="abs" style="left:-89.1px;top:233.6px;font-size:24px;color:rgba(0,0,0,.095);transform-origin:0 78%;transform:rotate(-30deg);white-space:nowrap;line-height:25px;-webkit-text-stroke:0">PrintDot</div>
<div class="abs" style="left:71.4px;top:233.6px;font-size:24px;color:rgba(0,0,0,.095);transform-origin:0 78%;transform:rotate(-30deg);white-space:nowrap;line-height:25px;-webkit-text-stroke:0">PrintDot</div>
<div class="abs" style="left:231.9px;top:233.6px;font-size:24px;color:rgba(0,0,0,.095);transform-origin:0 78%;transform:rotate(-30deg);white-space:nowrap;line-height:25px;-webkit-text-stroke:0">PrintDot</div>
<div class="abs" style="left:392.4px;top:233.6px;font-size:24px;color:rgba(0,0,0,.095);transform-origin:0 78%;transform:rotate(-30deg);white-space:nowrap;line-height:25px;-webkit-text-stroke:0">PrintDot</div>
<div class="abs" style="left:552.9px;top:233.6px;font-size:24px;color:rgba(0,0,0,.095);transform-origin:0 78%;transform:rotate(-30deg);white-space:nowrap;line-height:25px;-webkit-text-stroke:0">PrintDot</div>
<div class="abs" style="left:713.4px;top:233.6px;font-size:24px;color:rgba(0,0,0,.095);transform-origin:0 78%;transform:rotate(-30deg);white-space:nowrap;line-height:25px;-webkit-text-stroke:0">PrintDot</div>
<div class="abs" style="left:873.9px;top:233.6px;font-size:24px;color:rgba(0,0,0,.095);transform-origin:0 78%;transform:rotate(-30deg);white-space:nowrap;line-height:25px;-webkit-text-stroke:0">PrintDot</div>
<div class="abs" style="left:-89.1px;top:393.6px;font-size:24px;color:rgba(0,0,0,.095);transform-origin:0 78%;transform:rotate(-30deg);white-space:nowrap;line-height:25px;-webkit-text-stroke:0">PrintDot</div>
<div class="abs" style="left:71.4px;top:393.6px;font-size:24px;color:rgba(0,0,0,.095);transform-origin:0 78%;transform:rotate(-30deg);white-space:nowrap;line-height:25px;-webkit-text-stroke:0">PrintDot</div>
<div class="abs" style="left:231.9px;top:393.6px;font-size:24px;color:rgba(0,0,0,.095);transform-origin:0 78%;transform:rotate(-30deg);white-space:nowrap;line-height:25px;-webkit-text-stroke:0">PrintDot</div>
<div class="abs" style="left:392.4px;top:393.6px;font-size:24px;color:rgba(0,0,0,.095);transform-origin:0 78%;transform:rotate(-30deg);white-space:nowrap;line-height:25px;-webkit-text-stroke:0">PrintDot</div>
<div class="abs" style="left:552.9px;top:393.6px;font-size:24px;color:rgba(0,0,0,.095);transform-origin:0 78%;transform:rotate(-30deg);white-space:nowrap;line-height:25px;-webkit-text-stroke:0">PrintDot</div>
<div class="abs" style="left:713.4px;top:393.6px;font-size:24px;color:rgba(0,0,0,.095);transform-origin:0 78%;transform:rotate(-30deg);white-space:nowrap;line-height:25px;-webkit-text-stroke:0">PrintDot</div>
<div class="abs" style="left:873.9px;top:393.6px;font-size:24px;color:rgba(0,0,0,.095);transform-origin:0 78%;transform:rotate(-30deg);white-space:nowrap;line-height:25px;-webkit-text-stroke:0">PrintDot</div>
<div class="abs" style="left:-89.1px;top:553.6px;font-size:24px;color:rgba(0,0,0,.095);transform-origin:0 78%;transform:rotate(-30deg);white-space:nowrap;line-height:25px;-webkit-text-stroke:0">PrintDot</div>
<div class="abs" style="left:71.4px;top:553.6px;font-size:24px;color:rgba(0,0,0,.095);transform-origin:0 78%;transform:rotate(-30deg);white-space:nowrap;line-height:25px;-webkit-text-stroke:0">PrintDot</div>
<div class="abs" style="left:231.9px;top:553.6px;font-size:24px;color:rgba(0,0,0,.095);transform-origin:0 78%;transform:rotate(-30deg);white-space:nowrap;line-height:25px;-webkit-text-stroke:0">PrintDot</div>
<div class="abs" style="left:392.4px;top:553.6px;font-size:24px;color:rgba(0,0,0,.095);transform-origin:0 78%;transform:rotate(-30deg);white-space:nowrap;line-height:25px;-webkit-text-stroke:0">PrintDot</div>
<div class="abs" style="left:552.9px;top:553.6px;font-size:24px;color:rgba(0,0,0,.095);transform-origin:0 78%;transform:rotate(-30deg);white-space:nowrap;line-height:25px;-webkit-text-stroke:0">PrintDot</div>
<div class="abs" style="left:713.4px;top:553.6px;font-size:24px;color:rgba(0,0,0,.095);transform-origin:0 78%;transform:rotate(-30deg);white-space:nowrap;line-height:25px;-webkit-text-stroke:0">PrintDot</div>
<div class="abs" style="left:873.9px;top:553.6px;font-size:24px;color:rgba(0,0,0,.095);transform-origin:0 78%;transform:rotate(-30deg);white-space:nowrap;line-height:25px;-webkit-text-stroke:0">PrintDot</div>
<div class="abs" style="left:-89.1px;top:713.6px;font-size:24px;color:rgba(0,0,0,.095);transform-origin:0 78%;transform:rotate(-30deg);white-space:nowrap;line-height:25px;-webkit-text-stroke:0">PrintDot</div>
<div class="abs" style="left:71.4px;top:713.6px;font-size:24px;color:rgba(0,0,0,.095);transform-origin:0 78%;transform:rotate(-30deg);white-space:nowrap;line-height:25px;-webkit-text-stroke:0">PrintDot</div>
<div class="abs" style="left:231.9px;top:713.6px;font-size:24px;color:rgba(0,0,0,.095);transform-origin:0 78%;transform:rotate(-30deg);white-space:nowrap;line-height:25px;-webkit-text-stroke:0">PrintDot</div>
<div class="abs" style="left:392.4px;top:713.6px;font-size:24px;color:rgba(0,0,0,.095);transform-origin:0 78%;transform:rotate(-30deg);white-space:nowrap;line-height:25px;-webkit-text-stroke:0">PrintDot</div>
<div class="abs" style="left:552.9px;top:713.6px;font-size:24px;color:rgba(0,0,0,.095);transform-origin:0 78%;transform:rotate(-30deg);white-space:nowrap;line-height:25px;-webkit-text-stroke:0">PrintDot</div>
<div class="abs" style="left:713.4px;top:713.6px;font-size:24px;color:rgba(0,0,0,.095);transform-origin:0 78%;transform:rotate(-30deg);white-space:nowrap;line-height:25px;-webkit-text-stroke:0">PrintDot</div>
<div class="abs" style="left:873.9px;top:713.6px;font-size:24px;color:rgba(0,0,0,.095);transform-origin:0 78%;transform:rotate(-30deg);white-space:nowrap;line-height:25px;-webkit-text-stroke:0">PrintDot</div>
<div class="abs" style="left:-89.1px;top:873.6px;font-size:24px;color:rgba(0,0,0,.095);transform-origin:0 78%;transform:rotate(-30deg);white-space:nowrap;line-height:25px;-webkit-text-stroke:0">PrintDot</div>
<div class="abs" style="left:71.4px;top:873.6px;font-size:24px;color:rgba(0,0,0,.095);transform-origin:0 78%;transform:rotate(-30deg);white-space:nowrap;line-height:25px;-webkit-text-stroke:0">PrintDot</div>
<div class="abs" style="left:231.9px;top:873.6px;font-size:24px;color:rgba(0,0,0,.095);transform-origin:0 78%;transform:rotate(-30deg);white-space:nowrap;line-height:25px;-webkit-text-stroke:0">PrintDot</div>
<div class="abs" style="left:392.4px;top:873.6px;font-size:24px;color:rgba(0,0,0,.095);transform-origin:0 78%;transform:rotate(-30deg);white-space:nowrap;line-height:25px;-webkit-text-stroke:0">PrintDot</div>
<div class="abs" style="left:552.9px;top:873.6px;font-size:24px;color:rgba(0,0,0,.095);transform-origin:0 78%;transform:rotate(-30deg);white-space:nowrap;line-height:25px;-webkit-text-stroke:0">PrintDot</div>
<div class="abs" style="left:713.4px;top:873.6px;font-size:24px;color:rgba(0,0,0,.095);transform-origin:0 78%;transform:rotate(-30deg);white-space:nowrap;line-height:25px;-webkit-text-stroke:0">PrintDot</div>
<div class="abs" style="left:873.9px;top:873.6px;font-size:24px;color:rgba(0,0,0,.095);transform-origin:0 78%;transform:rotate(-30deg);white-space:nowrap;line-height:25px;-webkit-text-stroke:0">PrintDot</div>
<div class="abs" style="left:-89.1px;top:1033.6px;font-size:24px;color:rgba(0,0,0,.095);transform-origin:0 78%;transform:rotate(-30deg);white-space:nowrap;line-height:25px;-webkit-text-stroke:0">PrintDot</div>
<div class="abs" style="left:71.4px;top:1033.6px;font-size:24px;color:rgba(0,0,0,.095);transform-origin:0 78%;transform:rotate(-30deg);white-space:nowrap;line-height:25px;-webkit-text-stroke:0">PrintDot</div>
<div class="abs" style="left:231.9px;top:1033.6px;font-size:24px;color:rgba(0,0,0,.095);transform-origin:0 78%;transform:rotate(-30deg);white-space:nowrap;line-height:25px;-webkit-text-stroke:0">PrintDot</div>
<div class="abs" style="left:392.4px;top:1033.6px;font-size:24px;color:rgba(0,0,0,.095);transform-origin:0 78%;transform:rotate(-30deg);white-space:nowrap;line-height:25px;-webkit-text-stroke:0">PrintDot</div>
<div class="abs" style="left:552.9px;top:1033.6px;font-size:24px;color:rgba(0,0,0,.095);transform-origin:0 78%;transform:rotate(-30deg);white-space:nowrap;line-height:25px;-webkit-text-stroke:0">PrintDot</div>
<div class="abs" style="left:713.4px;top:1033.6px;font-size:24px;color:rgba(0,0,0,.095);transform-origin:0 78%;transform:rotate(-30deg);white-space:nowrap;line-height:25px;-webkit-text-stroke:0">PrintDot</div>
<div class="abs" style="left:873.9px;top:1033.6px;font-size:24px;color:rgba(0,0,0,.095);transform-origin:0 78%;transform:rotate(-30deg);white-space:nowrap;line-height:25px;-webkit-text-stroke:0">PrintDot</div>
<div class="abs" style="left:-89.1px;top:1193.6px;font-size:24px;color:rgba(0,0,0,.095);transform-origin:0 78%;transform:rotate(-30deg);white-space:nowrap;line-height:25px;-webkit-text-stroke:0">PrintDot</div>
<div class="abs" style="left:71.4px;top:1193.6px;font-size:24px;color:rgba(0,0,0,.095);transform-origin:0 78%;transform:rotate(-30deg);white-space:nowrap;line-height:25px;-webkit-text-stroke:0">PrintDot</div>
<div class="abs" style="left:231.9px;top:1193.6px;font-size:24px;color:rgba(0,0,0,.095);transform-origin:0 78%;transform:rotate(-30deg);white-space:nowrap;line-height:25px;-webkit-text-stroke:0">PrintDot</div>
<div class="abs" style="left:392.4px;top:1193.6px;font-size:24px;color:rgba(0,0,0,.095);transform-origin:0 78%;transform:rotate(-30deg);white-space:nowrap;line-height:25px;-webkit-text-stroke:0">PrintDot</div>
<div class="abs" style="left:552.9px;top:1193.6px;font-size:24px;color:rgba(0,0,0,.095);transform-origin:0 78%;transform:rotate(-30deg);white-space:nowrap;line-height:25px;-webkit-text-stroke:0">PrintDot</div>
<div class="abs" style="left:713.4px;top:1193.6px;font-size:24px;color:rgba(0,0,0,.095);transform-origin:0 78%;transform:rotate(-30deg);white-space:nowrap;line-height:25px;-webkit-text-stroke:0">PrintDot</div>
<div class="abs" style="left:873.9px;top:1193.6px;font-size:24px;color:rgba(0,0,0,.095);transform-origin:0 78%;transform:rotate(-30deg);white-space:nowrap;line-height:25px;-webkit-text-stroke:0">PrintDot</div>
</div>
<div class="abs" style="left:252.7px;top:120px;width:2.8px;height:900px;background:#7aabf9"></div>
<div class="abs" style="left:975.9px;top:120px;width:2.8px;height:900px;background:#7aabf9"></div>
<div class="abs" style="left:629.4px;top:0;width:1.4px;height:900px;background:#3b82f6"></div>
<div class="abs" style="left:0;top:142.7px;width:1262px;height:1.5px;background:#3b82f6"></div>
<div class="abs" style="left:1124.9px;top:560px;width:120.5px;height:297.9px;background:#f9fafb;border:1px solid #e5e7eb;border-radius:4px;box-shadow:0 4px 10px rgba(0,0,0,.15)">
<div class="abs" style="left:21.5px;top:223.8px;width:76.5px;height:73.1px;background:#fff;border:1px solid #e5e7eb">
<div class="abs" style="left:6px;top:1.5px;width:6px;height:3.6px;border:.8px solid #333;background:#aaa"></div><div class="abs" style="left:34px;top:.8px;width:8px;height:1.8px;background:#d97706"></div><div class="abs" style="left:56px;top:1.5px;width:16px;height:3.6px;border:.8px solid #333;background:#999"></div>
<div class="c" style="left:0;right:0;top:44px;height:20px;font-size:19px;color:#d1d5db;-webkit-text-stroke:0">3</div>
</div></div>
<div class="abs" style="right:0;top:0;width:10.5px;bottom:0;background:#eceef2"><svg class="ic" style="left:2.2px;top:5.5px" width="6" height="4.5" viewBox="0 0 6 4.5"><path d="M0 4.5 L3 0 L6 4.5Z" fill="#a3a7ae"/></svg><div class="abs" style="left:3px;top:13.5px;width:5px;height:600px;border-radius:3px;background:#b9bdc4"></div><svg class="ic" style="left:2.2px;bottom:4px" width="6" height="4.5" viewBox="0 0 6 4.5"><path d="M0 0 L3 4.5 L6 0Z" fill="#a3a7ae"/></svg></div>
</div>
<svg class="ic" style="left:20px;top:0" width="1262" height="20" viewBox="20 0 1262 20"><rect x="20" y="0" width="1262" height="20" fill="#f9fafb"/><path d="M33.25 15.5 V20" stroke="#9ca3af" stroke-width="1"/><path d="M46.64 0 V20" stroke="#9ca3af" stroke-width="1"/><text x="49.14" y="10.4" font-size="10" fill="#6b7280" font-family="Liberation Sans,sans-serif">-150</text><path d="M60.03 15.5 V20" stroke="#9ca3af" stroke-width="1"/><path d="M73.42 15.5 V20" stroke="#9ca3af" stroke-width="1"/><path d="M86.81 15.5 V20" stroke="#9ca3af" stroke-width="1"/><path d="M100.19 15.5 V20" stroke="#9ca3af" stroke-width="1"/><path d="M113.58 0 V20" stroke="#9ca3af" stroke-width="1"/><text x="116.08" y="10.4" font-size="10" fill="#6b7280" font-family="Liberation Sans,sans-serif">-100</text><path d="M126.97 15.5 V20" stroke="#9ca3af" stroke-width="1"/><path d="M140.36 15.5 V20" stroke="#9ca3af" stroke-width="1"/><path d="M153.75 15.5 V20" stroke="#9ca3af" stroke-width="1"/><path d="M167.14 15.5 V20" stroke="#9ca3af" stroke-width="1"/><path d="M180.52 0 V20" stroke="#9ca3af" stroke-width="1"/><text x="183.02" y="10.4" font-size="10" fill="#6b7280" font-family="Liberation Sans,sans-serif">-50</text><path d="M193.91 15.5 V20" stroke="#9ca3af" stroke-width="1"/><path d="M207.30 15.5 V20" stroke="#9ca3af" stroke-width="1"/><path d="M220.69 15.5 V20" stroke="#9ca3af" stroke-width="1"/><path d="M234.08 15.5 V20" stroke="#9ca3af" stroke-width="1"/><path d="M247.47 0 V20" stroke="#9ca3af" stroke-width="1"/><text x="249.97" y="10.4" font-size="10" fill="#6b7280" font-family="Liberation Sans,sans-serif">0</text><path d="M260.86 15.5 V20" stroke="#9ca3af" stroke-width="1"/><path d="M274.24 15.5 V20" stroke="#9ca3af" stroke-width="1"/><path d="M287.63 15.5 V20" stroke="#9ca3af" stroke-width="1"/><path d="M301.02 15.5 V20" stroke="#9ca3af" stroke-width="1"/><path d="M314.41 0 V20" stroke="#9ca3af" stroke-width="1"/><text x="316.91" y="10.4" font-size="10" fill="#6b7280" font-family="Liberation Sans,sans-serif">50</text><path d="M327.80 15.5 V20" stroke="#9ca3af" stroke-width="1"/><path d="M341.19 15.5 V20" stroke="#9ca3af" stroke-width="1"/><path d="M354.57 15.5 V20" stroke="#9ca3af" stroke-width="1"/><path d="M367.96 15.5 V20" stroke="#9ca3af" stroke-width="1"/><path d="M381.35 0 V20" stroke="#9ca3af" stroke-width="1"/><text x="383.85" y="10.4" font-size="10" fill="#6b7280" font-family="Liberation Sans,sans-serif">100</text><path d="M394.74 15.5 V20" stroke="#9ca3af" stroke-width="1"/><path d="M408.13 15.5 V20" stroke="#9ca3af" stroke-width="1"/><path d="M421.52 15.5 V20" stroke="#9ca3af" stroke-width="1"/><path d="M434.90 15.5 V20" stroke="#9ca3af" stroke-width="1"/><path d="M448.29 0 V20" stroke="#9ca3af" stroke-width="1"/><text x="450.79" y="10.4" font-size="10" fill="#6b7280" font-family="Liberation Sans,sans-serif">150</text><path d="M461.68 15.5 V20" stroke="#9ca3af" stroke-width="1"/><path d="M475.07 15.5 V20" stroke="#9ca3af" stroke-width="1"/><path d="M488.46 15.5 V20" stroke="#9ca3af" stroke-width="1"/><path d="M501.85 15.5 V20" stroke="#9ca3af" stroke-width="1"/><path d="M515.24 0 V20" stroke="#9ca3af" stroke-width="1"/><text x="517.74" y="10.4" font-size="10" fill="#6b7280" font-family="Liberation Sans,sans-serif">200</text><path d="M528.62 15.5 V20" stroke="#9ca3af" stroke-width="1"/><path d="M542.01 15.5 V20" stroke="#9ca3af" stroke-width="1"/><path d="M555.40 15.5 V20" stroke="#9ca3af" stroke-width="1"/><path d="M568.79 15.5 V20" stroke="#9ca3af" stroke-width="1"/><path d="M582.18 0 V20" stroke="#9ca3af" stroke-width="1"/><text x="584.68" y="10.4" font-size="10" fill="#6b7280" font-family="Liberation Sans,sans-serif">250</text><path d="M595.57 15.5 V20" stroke="#9ca3af" stroke-width="1"/><path d="M608.95 15.5 V20" stroke="#9ca3af" stroke-width="1"/><path d="M622.34 15.5 V20" stroke="#9ca3af" stroke-width="1"/><path d="M635.73 15.5 V20" stroke="#9ca3af" stroke-width="1"/><path d="M649.12 0 V20" stroke="#9ca3af" stroke-width="1"/><text x="651.62" y="10.4" font-size="10" fill="#6b7280" font-family="Liberation Sans,sans-serif">300</text><path d="M662.51 15.5 V20" stroke="#9ca3af" stroke-width="1"/><path d="M675.90 15.5 V20" stroke="#9ca3af" stroke-width="1"/><path d="M689.29 15.5 V20" stroke="#9ca3af" stroke-width="1"/><path d="M702.67 15.5 V20" stroke="#9ca3af" stroke-width="1"/><path d="M716.06 0 V20" stroke="#9ca3af" stroke-width="1"/><text x="718.56" y="10.4" font-size="10" fill="#6b7280" font-family="Liberation Sans,sans-serif">350</text><path d="M729.45 15.5 V20" stroke="#9ca3af" stroke-width="1"/><path d="M742.84 15.5 V20" stroke="#9ca3af" stroke-width="1"/><path d="M756.23 15.5 V20" stroke="#9ca3af" stroke-width="1"/><path d="M769.62 15.5 V20" stroke="#9ca3af" stroke-width="1"/><path d="M783.00 0 V20" stroke="#9ca3af" stroke-width="1"/><text x="785.50" y="10.4" font-size="10" fill="#6b7280" font-family="Liberation Sans,sans-serif">400</text><path d="M796.39 15.5 V20" stroke="#9ca3af" stroke-width="1"/><path d="M809.78 15.5 V20" stroke="#9ca3af" stroke-width="1"/><path d="M823.17 15.5 V20" stroke="#9ca3af" stroke-width="1"/><path d="M836.56 15.5 V20" stroke="#9ca3af" stroke-width="1"/><path d="M849.95 0 V20" stroke="#9ca3af" stroke-width="1"/><text x="852.45" y="10.4" font-size="10" fill="#6b7280" font-family="Liberation Sans,sans-serif">450</text><path d="M863.34 15.5 V20" stroke="#9ca3af" stroke-width="1"/><path d="M876.72 15.5 V20" stroke="#9ca3af" stroke-width="1"/><path d="M890.11 15.5 V20" stroke="#9ca3af" stroke-width="1"/><path d="M903.50 15.5 V20" stroke="#9ca3af" stroke-width="1"/><path d="M916.89 0 V20" stroke="#9ca3af" stroke-width="1"/><text x="919.39" y="10.4" font-size="10" fill="#6b7280" font-family="Liberation Sans,sans-serif">500</text><path d="M930.28 15.5 V20" stroke="#9ca3af" stroke-width="1"/><path d="M943.67 15.5 V20" stroke="#9ca3af" stroke-width="1"/><path d="M957.05 15.5 V20" stroke="#9ca3af" stroke-width="1"/><path d="M970.44 15.5 V20" stroke="#9ca3af" stroke-width="1"/><path d="M983.83 0 V20" stroke="#9ca3af" stroke-width="1"/><text x="986.33" y="10.4" font-size="10" fill="#6b7280" font-family="Liberation Sans,sans-serif">550</text><path d="M997.22 15.5 V20" stroke="#9ca3af" stroke-width="1"/><path d="M1010.61 15.5 V20" stroke="#9ca3af" stroke-width="1"/><path d="M1024.00 15.5 V20" stroke="#9ca3af" stroke-width="1"/><path d="M1037.38 15.5 V20" stroke="#9ca3af" stroke-width="1"/><path d="M1050.77 0 V20" stroke="#9ca3af" stroke-width="1"/><text x="1053.27" y="10.4" font-size="10" fill="#6b7280" font-family="Liberation Sans,sans-serif">600</text><path d="M1064.16 15.5 V20" stroke="#9ca3af" stroke-width="1"/><path d="M1077.55 15.5 V20" stroke="#9ca3af" stroke-width="1"/><path d="M1090.94 15.5 V20" stroke="#9ca3af" stroke-width="1"/><path d="M1104.33 15.5 V20" stroke="#9ca3af" stroke-width="1"/><path d="M1117.72 0 V20" stroke="#9ca3af" stroke-width="1"/><text x="1120.22" y="10.4" font-size="10" fill="#6b7280" font-family="Liberation Sans,sans-serif">650</text><path d="M1131.10 15.5 V20" stroke="#9ca3af" stroke-width="1"/><path d="M1144.49 15.5 V20" stroke="#9ca3af" stroke-width="1"/><path d="M1157.88 15.5 V20" stroke="#9ca3af" stroke-width="1"/><path d="M1171.27 15.5 V20" stroke="#9ca3af" stroke-width="1"/><path d="M1184.66 0 V20" stroke="#9ca3af" stroke-width="1"/><text x="1187.16" y="10.4" font-size="10" fill="#6b7280" font-family="Liberation Sans,sans-serif">700</text><path d="M1198.05 15.5 V20" stroke="#9ca3af" stroke-width="1"/><path d="M1211.43 15.5 V20" stroke="#9ca3af" stroke-width="1"/><path d="M1224.82 15.5 V20" stroke="#9ca3af" stroke-width="1"/><path d="M1238.21 15.5 V20" stroke="#9ca3af" stroke-width="1"/><path d="M1251.60 0 V20" stroke="#9ca3af" stroke-width="1"/><text x="1254.10" y="10.4" font-size="10" fill="#6b7280" font-family="Liberation Sans,sans-serif">750</text><path d="M1264.99 15.5 V20" stroke="#9ca3af" stroke-width="1"/><path d="M1278.38 15.5 V20" stroke="#9ca3af" stroke-width="1"/><path d="M20 19.5 H1282" stroke="#d1d5db" stroke-width="1"/></svg>
<svg class="ic" style="left:0;top:20px" width="20" height="875" viewBox="0 20 20 875"><rect x="0" y="20" width="20" height="875" fill="#f9fafb"/><path d="M15.5 24.96 H20" stroke="#9ca3af" stroke-width="1"/><path d="M15.5 38.34 H20" stroke="#9ca3af" stroke-width="1"/><path d="M0 51.73 H20" stroke="#9ca3af" stroke-width="1"/><text transform="translate(11.2 54.63) rotate(-90)" font-size="10" fill="#6b7280" font-family="Liberation Sans,sans-serif">0</text><path d="M15.5 65.12 H20" stroke="#9ca3af" stroke-width="1"/><path d="M15.5 78.51 H20" stroke="#9ca3af" stroke-width="1"/><path d="M15.5 91.90 H20" stroke="#9ca3af" stroke-width="1"/><path d="M15.5 105.29 H20" stroke="#9ca3af" stroke-width="1"/><path d="M0 118.68 H20" stroke="#9ca3af" stroke-width="1"/><text transform="translate(11.2 119.88) rotate(-90)" font-size="10" fill="#6b7280" font-family="Liberation Sans,sans-serif">50</text><path d="M15.5 132.06 H20" stroke="#9ca3af" stroke-width="1"/><path d="M15.5 145.45 H20" stroke="#9ca3af" stroke-width="1"/><path d="M15.5 158.84 H20" stroke="#9ca3af" stroke-width="1"/><path d="M15.5 172.23 H20" stroke="#9ca3af" stroke-width="1"/><path d="M0 185.62 H20" stroke="#9ca3af" stroke-width="1"/><text transform="translate(11.2 187.12) rotate(-90)" font-size="10" fill="#6b7280" font-family="Liberation Sans,sans-serif">100</text><path d="M15.5 199.01 H20" stroke="#9ca3af" stroke-width="1"/><path d="M15.5 212.39 H20" stroke="#9ca3af" stroke-width="1"/><path d="M15.5 225.78 H20" stroke="#9ca3af" stroke-width="1"/><path d="M15.5 239.17 H20" stroke="#9ca3af" stroke-width="1"/><path d="M0 252.56 H20" stroke="#9ca3af" stroke-width="1"/><text transform="translate(11.2 254.06) rotate(-90)" font-size="10" fill="#6b7280" font-family="Liberation Sans,sans-serif">150</text><path d="M15.5 265.95 H20" stroke="#9ca3af" stroke-width="1"/><path d="M15.5 279.34 H20" stroke="#9ca3af" stroke-width="1"/><path d="M15.5 292.73 H20" stroke="#9ca3af" stroke-width="1"/><path d="M15.5 306.11 H20" stroke="#9ca3af" stroke-width="1"/><path d="M0 319.50 H20" stroke="#9ca3af" stroke-width="1"/><text transform="translate(11.2 321.00) rotate(-90)" font-size="10" fill="#6b7280" font-family="Liberation Sans,sans-serif">200</text><path d="M15.5 332.89 H20" stroke="#9ca3af" stroke-width="1"/><path d="M15.5 346.28 H20" stroke="#9ca3af" stroke-width="1"/><path d="M15.5 359.67 H20" stroke="#9ca3af" stroke-width="1"/><path d="M15.5 373.06 H20" stroke="#9ca3af" stroke-width="1"/><path d="M0 386.44 H20" stroke="#9ca3af" stroke-width="1"/><text transform="translate(11.2 387.94) rotate(-90)" font-size="10" fill="#6b7280" font-family="Liberation Sans,sans-serif">250</text><path d="M15.5 399.83 H20" stroke="#9ca3af" stroke-width="1"/><path d="M15.5 413.22 H20" stroke="#9ca3af" stroke-width="1"/><path d="M15.5 426.61 H20" stroke="#9ca3af" stroke-width="1"/><path d="M15.5 440.00 H20" stroke="#9ca3af" stroke-width="1"/><path d="M0 453.39 H20" stroke="#9ca3af" stroke-width="1"/><text transform="translate(11.2 454.89) rotate(-90)" font-size="10" fill="#6b7280" font-family="Liberation Sans,sans-serif">300</text><path d="M15.5 466.78 H20" stroke="#9ca3af" stroke-width="1"/><path d="M15.5 480.16 H20" stroke="#9ca3af" stroke-width="1"/><path d="M15.5 493.55 H20" stroke="#9ca3af" stroke-width="1"/><path d="M15.5 506.94 H20" stroke="#9ca3af" stroke-width="1"/><path d="M0 520.33 H20" stroke="#9ca3af" stroke-width="1"/><text transform="translate(11.2 521.83) rotate(-90)" font-size="10" fill="#6b7280" font-family="Liberation Sans,sans-serif">350</text><path d="M15.5 533.72 H20" stroke="#9ca3af" stroke-width="1"/><path d="M15.5 547.11 H20" stroke="#9ca3af" stroke-width="1"/><path d="M15.5 560.49 H20" stroke="#9ca3af" stroke-width="1"/><path d="M15.5 573.88 H20" stroke="#9ca3af" stroke-width="1"/><path d="M0 587.27 H20" stroke="#9ca3af" stroke-width="1"/><text transform="translate(11.2 588.77) rotate(-90)" font-size="10" fill="#6b7280" font-family="Liberation Sans,sans-serif">400</text><path d="M15.5 600.66 H20" stroke="#9ca3af" stroke-width="1"/><path d="M15.5 614.05 H20" stroke="#9ca3af" stroke-width="1"/><path d="M15.5 627.44 H20" stroke="#9ca3af" stroke-width="1"/><path d="M15.5 640.82 H20" stroke="#9ca3af" stroke-width="1"/><path d="M0 654.21 H20" stroke="#9ca3af" stroke-width="1"/><text transform="translate(11.2 655.71) rotate(-90)" font-size="10" fill="#6b7280" font-family="Liberation Sans,sans-serif">450</text><path d="M15.5 667.60 H20" stroke="#9ca3af" stroke-width="1"/><path d="M15.5 680.99 H20" stroke="#9ca3af" stroke-width="1"/><path d="M15.5 694.38 H20" stroke="#9ca3af" stroke-width="1"/><path d="M15.5 707.77 H20" stroke="#9ca3af" stroke-width="1"/><path d="M0 721.16 H20" stroke="#9ca3af" stroke-width="1"/><text transform="translate(11.2 722.66) rotate(-90)" font-size="10" fill="#6b7280" font-family="Liberation Sans,sans-serif">500</text><path d="M15.5 734.54 H20" stroke="#9ca3af" stroke-width="1"/><path d="M15.5 747.93 H20" stroke="#9ca3af" stroke-width="1"/><path d="M15.5 761.32 H20" stroke="#9ca3af" stroke-width="1"/><path d="M15.5 774.71 H20" stroke="#9ca3af" stroke-width="1"/><path d="M0 788.10 H20" stroke="#9ca3af" stroke-width="1"/><text transform="translate(11.2 789.60) rotate(-90)" font-size="10" fill="#6b7280" font-family="Liberation Sans,sans-serif">550</text><path d="M15.5 801.49 H20" stroke="#9ca3af" stroke-width="1"/><path d="M15.5 814.87 H20" stroke="#9ca3af" stroke-width="1"/><path d="M15.5 828.26 H20" stroke="#9ca3af" stroke-width="1"/><path d="M15.5 841.65 H20" stroke="#9ca3af" stroke-width="1"/><path d="M0 855.04 H20" stroke="#9ca3af" stroke-width="1"/><text transform="translate(11.2 856.54) rotate(-90)" font-size="10" fill="#6b7280" font-family="Liberation Sans,sans-serif">600</text><path d="M15.5 868.43 H20" stroke="#9ca3af" stroke-width="1"/><path d="M15.5 881.82 H20" stroke="#9ca3af" stroke-width="1"/><path d="M15.5 895.21 H20" stroke="#9ca3af" stroke-width="1"/><path d="M19.5 20 V895" stroke="#d1d5db" stroke-width="1"/></svg>
<div class="abs" style="left:0;top:0;width:20px;height:20px;background:#eceef1;border-right:1px solid #d1d5db;border-bottom:1px solid #d1d5db"></div>
</div>
<div id="right"><div class="ph"><h2>属性面板</h2><p>编辑组件属性</p></div>
<div class="tabs"><div class="on">属性</div><div>样式</div><div>高级</div></div>
<div class="abs" style="left:0;top:122px;right:0;bottom:0;overflow:hidden">
<div class="box" style="top:-146.5px"><div class="ed sm" style="left:0;top:0;right:0;bottom:0"><div class="no" style="left:0;width:33px;top:-0.20px">1</div><div class="ln" style="left:59px;top:-0.20px"><span style="color:#0431fa">[</span></div><div class="no" style="left:0;width:33px;top:15.80px">2</div><div class="g" style="left:59.0px;top:16.00px;height:16.00px"></div><div class="ln" style="left:59px;top:15.80px"><span style="color:#319331">  {</span></div><div class="no" style="left:0;width:33px;top:31.80px">3</div><div class="g" style="left:59.0px;top:32.00px;height:16.00px"></div><div class="g" style="left:72.2px;top:32.00px;height:16.00px"></div><div class="ln" style="left:59px;top:31.80px"><span style="color:#a31515">    &quot;field&quot;</span>: <span style="color:#0451a5">&quot;name&quot;</span>,</div><div class="no" style="left:0;width:33px;top:47.80px">4</div><div class="g" style="left:59.0px;top:48.00px;height:16.00px"></div><div class="g" style="left:72.2px;top:48.00px;height:16.00px"></div><div class="ln" style="left:59px;top:47.80px"><span style="color:#a31515">    &quot;header&quot;</span>: <span style="color:#0451a5">&quot;<b>名</b><b>称</b>&quot;</span>,</div><div class="no" style="left:0;width:33px;top:63.80px">5</div><div class="g" style="left:59.0px;top:64.00px;height:16.00px"></div><div class="g" style="left:72.2px;top:64.00px;height:16.00px"></div><div class="ln" style="left:59px;top:63.80px"><span style="color:#a31515">    &quot;width&quot;</span>: <span style="color:#098658">120</span></div><div class="no" style="left:0;width:33px;top:79.80px">6</div><div class="g" style="left:59.0px;top:80.00px;height:16.00px"></div><div class="ln" style="left:59px;top:79.80px"><span style="color:#319331">  }</span>,</div><div class="no" style="left:0;width:33px;top:95.80px">7</div><div class="g" style="left:59.0px;top:96.00px;height:16.00px"></div><div class="ln" style="left:59px;top:95.80px"><span style="color:#319331">  {</span></div><div class="no" style="left:0;width:33px;top:111.80px">8</div><div class="g" style="left:59.0px;top:112.00px;height:16.00px"></div><div class="g" style="left:72.2px;top:112.00px;height:16.00px"></div><div class="ln" style="left:59px;top:111.80px"><span style="color:#a31515">    &quot;field&quot;</span>: <span style="color:#0451a5">&quot;qty&quot;</span>,</div><div class="no" style="left:0;width:33px;top:127.80px">9</div><div class="g" style="left:59.0px;top:128.00px;height:16.00px"></div><div class="g" style="left:72.2px;top:128.00px;height:16.00px"></div><div class="ln" style="left:59px;top:127.80px"><span style="color:#a31515">    &quot;header&quot;</span>: <span style="color:#0451a5">&quot;<b>数</b><b>量</b>&quot;</span>,</div><div class="no" style="left:0;width:33px;top:143.80px">10</div><div class="g" style="left:59.0px;top:144.00px;height:16.00px"></div><div class="g" style="left:72.2px;top:144.00px;height:16.00px"></div><div class="ln" style="left:59px;top:143.80px"><span style="color:#a31515">    &quot;width&quot;</span>: <span style="color:#098658">100</span></div><div class="no" style="left:0;width:33px;top:159.80px">11</div><div class="g" style="left:59.0px;top:160.00px;height:16.00px"></div><div class="ln" style="left:59px;top:159.80px"><span style="color:#319331">  }</span>,</div><div class="no" style="left:0;width:33px;top:175.80px">12</div><div class="g" style="left:59.0px;top:176.00px;height:16.00px"></div><div class="ln" style="left:59px;top:175.80px"><span style="color:#319331">  {</span></div><div class="no" style="left:0;width:33px;top:191.80px">13</div><div class="g" style="left:59.0px;top:192.00px;height:16.00px"></div><div class="g" style="left:72.2px;top:192.00px;height:16.00px"></div><div class="ln" style="left:59px;top:191.80px"><span style="color:#a31515">    &quot;field&quot;</span>: <span style="color:#0451a5">&quot;price&quot;</span>,</div><div class="no" style="left:0;width:33px;top:207.80px">14</div><div class="g" style="left:59.0px;top:208.00px;height:16.00px"></div><div class="g" style="left:72.2px;top:208.00px;height:16.00px"></div><div class="ln" style="left:59px;top:207.80px"><span style="color:#a31515">    &quot;header&quot;</span>: <span style="color:#0451a5">&quot;<b>单</b><b>价</b>&quot;</span>,</div><div class="no" style="left:0;width:33px;top:223.80px">15</div><div class="g" style="left:59.0px;top:224.00px;height:16.00px"></div><div class="g" style="left:72.2px;top:224.00px;height:16.00px"></div><div class="ln" style="left:59px;top:223.80px"><span style="color:#a31515">    &quot;width&quot;</span>: <span style="color:#098658">100</span></div><div class="no" style="left:0;width:33px;top:239.80px">16</div><div class="g" style="left:59.0px;top:240.00px;height:16.00px"></div><div class="ln" style="left:59px;top:239.80px"><span style="color:#319331">  }</span>,</div></div><svg class="ic" style="right:1px;bottom:1px" width="11" height="11" viewBox="0 0 11 11"><path d="M10.5 2 L2 10.5 M10.5 6.5 L6.5 10.5" stroke="#6b7280" stroke-width="1"/></svg></div>
<div class="lab" style="top:65.5px">数据 (JSON)</div><div class="lang" style="right:52.7px;top:66.0px">JSON</div><svg class="ic" style="left:340.0px;top:69.0px" width="11" height="10" viewBox="0 0 11 10" ><path d="M1.2 8.8 L9.8 1.2" stroke="#7b8391" stroke-width="1.2"/><path d="M6.4 .6 H10.4 V4.4Z M.6 5.6 V9.4 H4.6Z" fill="#7b8391"/></svg><div class="box" style="top:88.0px"><div class="ed sm" style="left:0;top:0;right:0;bottom:0"><div class="no" style="left:0;width:33px;top:-0.20px">1</div><div class="ln" style="left:59px;top:-0.20px"><span style="color:#0431fa">[</span></div><div class="no" style="left:0;width:33px;top:15.80px">2</div><div class="g" style="left:59.0px;top:16.00px;height:16.00px"></div><div class="ln" style="left:59px;top:15.80px"><span style="color:#319331">  {</span></div><div class="no" style="left:0;width:33px;top:31.80px">3</div><div class="g" style="left:59.0px;top:32.00px;height:16.00px"></div><div class="g" style="left:72.2px;top:32.00px;height:16.00px"></div><div class="ln" style="left:59px;top:31.80px"><span style="color:#a31515">    &quot;id&quot;</span>: <span style="color:#098658">1</span>,</div><div class="no" style="left:0;width:33px;top:47.80px">4</div><div class="g" style="left:59.0px;top:48.00px;height:16.00px"></div><div class="g" style="left:72.2px;top:48.00px;height:16.00px"></div><div class="ln" style="left:59px;top:47.80px"><span style="color:#a31515">    &quot;name&quot;</span>: <span style="color:#0451a5">&quot;<b>商</b><b>品</b> 1&quot;</span>,</div><div class="no" style="left:0;width:33px;top:63.80px">5</div><div class="g" style="left:59.0px;top:64.00px;height:16.00px"></div><div class="g" style="left:72.2px;top:64.00px;height:16.00px"></div><div class="ln" style="left:59px;top:63.80px"><span style="color:#a31515">    &quot;qty&quot;</span>: <span style="color:#098658">1</span>,</div><div class="no" style="left:0;width:33px;top:79.80px">6</div><div class="g" style="left:59.0px;top:80.00px;height:16.00px"></div><div class="g" style="left:72.2px;top:80.00px;height:16.00px"></div><div class="ln" style="left:59px;top:79.80px"><span style="color:#a31515">    &quot;price&quot;</span>: <span style="color:#098658">100</span>,</div><div class="no" style="left:0;width:33px;top:95.80px">7</div><div class="g" style="left:59.0px;top:96.00px;height:16.00px"></div><div class="g" style="left:72.2px;top:96.00px;height:16.00px"></div><div class="ln" style="left:59px;top:95.80px"><span style="color:#a31515">    &quot;total&quot;</span>: <span style="color:#098658">100</span></div><div class="no" style="left:0;width:33px;top:111.80px">8</div><div class="g" style="left:59.0px;top:112.00px;height:16.00px"></div><div class="ln" style="left:59px;top:111.80px"><span style="color:#319331">  }</span>,</div><div class="no" style="left:0;width:33px;top:127.80px">9</div><div class="g" style="left:59.0px;top:128.00px;height:16.00px"></div><div class="ln" style="left:59px;top:127.80px"><span style="color:#319331">  {</span></div><div class="no" style="left:0;width:33px;top:143.80px">10</div><div class="g" style="left:59.0px;top:144.00px;height:16.00px"></div><div class="g" style="left:72.2px;top:144.00px;height:16.00px"></div><div class="ln" style="left:59px;top:143.80px"><span style="color:#a31515">    &quot;id&quot;</span>: <span style="color:#098658">2</span>,</div><div class="no" style="left:0;width:33px;top:159.80px">11</div><div class="g" style="left:59.0px;top:160.00px;height:16.00px"></div><div class="g" style="left:72.2px;top:160.00px;height:16.00px"></div><div class="ln" style="left:59px;top:159.80px"><span style="color:#a31515">    &quot;name&quot;</span>: <span style="color:#0451a5">&quot;<b>商</b><b>品</b> 2&quot;</span>,</div><div class="no" style="left:0;width:33px;top:175.80px">12</div><div class="g" style="left:59.0px;top:176.00px;height:16.00px"></div><div class="g" style="left:72.2px;top:176.00px;height:16.00px"></div><div class="ln" style="left:59px;top:175.80px"><span style="color:#a31515">    &quot;qty&quot;</span>: <span style="color:#098658">2</span>,</div><div class="no" style="left:0;width:33px;top:191.80px">13</div><div class="g" style="left:59.0px;top:192.00px;height:16.00px"></div><div class="g" style="left:72.2px;top:192.00px;height:16.00px"></div><div class="ln" style="left:59px;top:191.80px"><span style="color:#a31515">    &quot;price&quot;</span>: <span style="color:#098658">100</span>,</div><div class="no" style="left:0;width:33px;top:207.80px">14</div><div class="g" style="left:59.0px;top:208.00px;height:16.00px"></div><div class="g" style="left:72.2px;top:208.00px;height:16.00px"></div><div class="ln" style="left:59px;top:207.80px"><span style="color:#a31515">    &quot;total&quot;</span>: <span style="color:#098658">200</span></div><div class="no" style="left:0;width:33px;top:223.80px">15</div><div class="g" style="left:59.0px;top:224.00px;height:16.00px"></div><div class="ln" style="left:59px;top:223.80px"><span style="color:#319331">  }</span></div><div class="no" style="left:0;width:33px;top:239.80px">16</div><div class="ln" style="left:59px;top:239.80px"><span style="color:#0431fa">]</span></div></div><svg class="ic" style="right:1px;bottom:1px" width="11" height="11" viewBox="0 0 11 11"><path d="M10.5 2 L2 10.5 M10.5 6.5 L6.5 10.5" stroke="#6b7280" stroke-width="1"/></svg></div>
<div class="lab" style="top:299.8px">表脚数据 (JSON)</div><div class="lang" style="right:52.7px;top:300.3px">JSON</div><svg class="ic" style="left:340.0px;top:303.3px" width="11" height="10" viewBox="0 0 11 10" ><path d="M1.2 8.8 L9.8 1.2" stroke="#7b8391" stroke-width="1.2"/><path d="M6.4 .6 H10.4 V4.4Z M.6 5.6 V9.4 H4.6Z" fill="#7b8391"/></svg><div class="box" style="top:322.3px"><div class="ed sm" style="left:0;top:0;right:0;bottom:0"><div class="no" style="left:0;width:33px;top:21.12px">21</div><div class="g" style="left:59.0px;top:21.32px;height:16.00px"></div><div class="g" style="left:72.2px;top:21.32px;height:16.00px"></div><div class="g" style="left:85.4px;top:21.32px;height:16.00px"></div><div class="ln" style="left:59px;top:21.12px"><span style="color:#a31515">      &quot;field&quot;</span>: <span style="color:#0451a5">&quot;{#qtySum}&quot;</span></div><div class="no" style="left:0;width:33px;top:37.12px">22</div><div class="g" style="left:59.0px;top:37.32px;height:16.00px"></div><div class="g" style="left:72.2px;top:37.32px;height:16.00px"></div><div class="ln" style="left:59px;top:37.12px"><span style="color:#7b3814">    }</span>,</div><div class="no" style="left:0;width:33px;top:53.12px">23</div><div class="g" style="left:59.0px;top:53.32px;height:16.00px"></div><div class="g" style="left:72.2px;top:53.32px;height:16.00px"></div><div class="ln" style="left:59px;top:53.12px"><span style="color:#a31515">    &quot;total&quot;</span>: <span style="color:#7b3814">{</span></div><div class="no" style="left:0;width:33px;top:69.12px">24</div><div class="g" style="left:59.0px;top:69.32px;height:16.00px"></div><div class="g" style="left:72.2px;top:69.32px;height:16.00px"></div><div class="g" style="left:85.4px;top:69.32px;height:16.00px"></div><div class="ln" style="left:59px;top:69.12px"><span style="color:#a31515">      &quot;value&quot;</span>: <span style="color:#0451a5">&quot;&quot;</span>,</div><div class="no" style="left:0;width:33px;top:85.12px">25</div><div class="g" style="left:59.0px;top:85.32px;height:16.00px"></div><div class="g" style="left:72.2px;top:85.32px;height:16.00px"></div><div class="g" style="left:85.4px;top:85.32px;height:16.00px"></div><div class="ln" style="left:59px;top:85.12px"><span style="color:#a31515">      &quot;field&quot;</span>: <span style="color:#0451a5">&quot;{#totalSum}&quot;</span></div><div class="no" style="left:0;width:33px;top:101.12px">26</div><div class="g" style="left:59.0px;top:101.32px;height:16.00px"></div><div class="g" style="left:72.2px;top:101.32px;height:16.00px"></div><div class="ln" style="left:59px;top:101.12px"><span style="color:#7b3814">    }</span></div><div class="no" style="left:0;width:33px;top:117.12px">27</div><div class="g" style="left:59.0px;top:117.32px;height:16.00px"></div><div class="ln" style="left:59px;top:117.12px"><span style="color:#319331">  }</span>,</div><div class="no" style="left:0;width:33px;top:133.12px">28</div><div class="g" style="left:59.0px;top:133.32px;height:16.00px"></div><div class="ln" style="left:59px;top:133.12px"><span style="color:#319331">  {</span></div><div class="no" style="left:0;width:33px;top:149.12px">29</div><div class="g" style="left:59.0px;top:149.32px;height:16.00px"></div><div class="g" style="left:72.2px;top:149.32px;height:16.00px"></div><div class="ln" style="left:59px;top:149.12px"><span style="color:#a31515">    &quot;id&quot;</span>: <span style="color:#7b3814">{</span></div><div class="no" style="left:0;width:33px;top:165.12px">30</div><div class="g" style="left:59.0px;top:165.32px;height:16.00px"></div><div class="g" style="left:72.2px;top:165.32px;height:16.00px"></div><div class="g" style="left:85.4px;top:165.32px;height:16.00px"></div><div class="ln" style="left:59px;top:165.12px"><span style="color:#a31515">      &quot;value&quot;</span>: <span style="color:#0451a5">&quot;<b>大</b><b>写</b><b>金</b><b>额</b>&quot;</span></div><div class="no" style="left:0;width:33px;top:181.12px">31</div><div class="g" style="left:59.0px;top:181.32px;height:16.00px"></div><div class="g" style="left:72.2px;top:181.32px;height:16.00px"></div><div class="ln" style="left:59px;top:181.12px"><span style="color:#7b3814">    }</span>,</div><div class="no" style="left:0;width:33px;top:197.12px">32</div><div class="g" style="left:59.0px;top:197.32px;height:16.00px"></div><div class="g" style="left:72.2px;top:197.32px;height:16.00px"></div><div class="ln" style="left:59px;top:197.12px"><span style="color:#a31515">    &quot;name&quot;</span>: <span style="color:#7b3814">{</span></div><div class="abs" style="left:0;top:0;right:15px;height:33px;background:#fff;box-shadow:0 2px 3px rgba(0,0,0,.18);border-bottom:1px solid #ddd"><div class="no" style="left:0;width:33px;top:0.80px">15</div><div class="ln" style="left:59px;top:0.80px"><span style="color:#319331">  {</span></div><div class="no" style="left:0;width:33px;top:16.80px">19</div><div class="ln" style="left:59px;top:16.80px"><span style="color:#a31515">    &quot;qty&quot;</span>: <span style="color:#7b3814">{</span></div></div></div><svg class="ic" style="right:1px;bottom:1px" width="11" height="11" viewBox="0 0 11 11"><path d="M10.5 2 L2 10.5 M10.5 6.5 L6.5 10.5" stroke="#6b7280" stroke-width="1"/></svg></div>
<div class="lab" style="top:534.5px">自定义脚本</div><div class="lang" style="right:52.7px;top:535.0px">JAVASCRIPT</div><svg class="ic" style="left:340.0px;top:538.0px" width="11" height="10" viewBox="0 0 11 10" ><path d="M1.2 8.8 L9.8 1.2" stroke="#7b8391" stroke-width="1.2"/><path d="M6.4 .6 H10.4 V4.4Z M.6 5.6 V9.4 H4.6Z" fill="#7b8391"/></svg><div class="box" style="top:557.0px"><div class="ed sm" style="left:0;top:0;right:0;bottom:0"><div class="no" style="left:0;width:33px;top:-0.20px">1</div><div class="ln" style="left:59px;top:-0.20px"><span style="color:#008000">// RMB Uppercase Conversion</span></div><div class="no" style="left:0;width:33px;top:15.80px">2</div><div class="ln" style="left:59px;top:15.80px"><span style="color:#0000ff">try </span><span style="color:#0431fa">{</span></div><div class="no" style="left:0;width:33px;top:31.80px">3</div><div class="g" style="left:59.0px;top:32.00px;height:16.00px"></div><div class="ln" style="left:59px;top:31.80px"><span style="color:#0000ff">  function </span>digitUppercase<span style="color:#319331">(</span>n<span style="color:#319331">) {</span></div><div class="no" style="left:0;width:33px;top:47.80px">4</div><div class="g" style="left:59.0px;top:48.00px;height:16.00px"></div><div class="g" style="left:85.4px;top:48.00px;height:16.00px"></div><div class="ln" style="left:59px;top:47.80px"><span style="color:#0000ff">      var </span>fraction = <span style="color:#7b3814">[</span><span style="color:#a31515">&#x27;<b>角</b>&#x27;</span>, <span style="color:#a31515">&#x27;<b>分</b>&#x27;</span><span style="color:#7b3814">]</span>;</div><div class="no" style="left:0;width:33px;top:63.80px">5</div><div class="g" style="left:59.0px;top:64.00px;height:16.00px"></div><div class="g" style="left:85.4px;top:64.00px;height:16.00px"></div><div class="ln" style="left:59px;top:63.80px"><span style="color:#0000ff">      var </span>digit = <span style="color:#7b3814">[</span></div><div class="no" style="left:0;width:33px;top:79.80px">6</div><div class="g" style="left:59.0px;top:80.00px;height:16.00px"></div><div class="g" style="left:85.4px;top:80.00px;height:16.00px"></div><div class="g" style="left:111.8px;top:80.00px;height:16.00px"></div><div class="ln" style="left:59px;top:79.80px"><span style="color:#a31515">          &#x27;<b>零</b>&#x27;</span>, <span style="color:#a31515">&#x27;<b>壹</b>&#x27;</span>, <span style="color:#a31515">&#x27;<b>贰</b>&#x27;</span>, <span style="color:#a31515">&#x27;<b>叁</b>&#x27;</span>, <span style="color:#a31515">&#x27;<b>肆</b>&#x27;</span>,</div><div class="no" style="left:0;width:33px;top:95.80px">7</div><div class="g" style="left:59.0px;top:96.00px;height:16.00px"></div><div class="g" style="left:85.4px;top:96.00px;height:16.00px"></div><div class="g" style="left:111.8px;top:96.00px;height:16.00px"></div><div class="ln" style="left:59px;top:95.80px"><span style="color:#a31515">          &#x27;<b>伍</b>&#x27;</span>, <span style="color:#a31515">&#x27;<b>陆</b>&#x27;</span>, <span style="color:#a31515">&#x27;<b>柒</b>&#x27;</span>, <span style="color:#a31515">&#x27;<b>捌</b>&#x27;</span>, <span style="color:#a31515">&#x27;<b>玖</b>&#x27;</span></div><div class="no" style="left:0;width:33px;top:111.80px">8</div><div class="g" style="left:59.0px;top:112.00px;height:16.00px"></div><div class="g" style="left:85.4px;top:112.00px;height:16.00px"></div><div class="ln" style="left:59px;top:111.80px"><span style="color:#7b3814">      ]</span>;</div><div class="no" style="left:0;width:33px;top:127.80px">9</div><div class="g" style="left:59.0px;top:128.00px;height:16.00px"></div><div class="g" style="left:85.4px;top:128.00px;height:16.00px"></div><div class="ln" style="left:59px;top:127.80px"><span style="color:#0000ff">      var </span>unit = <span style="color:#7b3814">[</span></div><div class="no" style="left:0;width:33px;top:143.80px">10</div><div class="g" style="left:59.0px;top:144.00px;height:16.00px"></div><div class="g" style="left:85.4px;top:144.00px;height:16.00px"></div><div class="g" style="left:111.8px;top:144.00px;height:16.00px"></div><div class="ln" style="left:59px;top:143.80px"><span style="color:#0431fa">          [</span><span style="color:#a31515">&#x27;<b>元</b>&#x27;</span>, <span style="color:#a31515">&#x27;<b>万</b>&#x27;</span>, <span style="color:#a31515">&#x27;<b>亿</b>&#x27;</span><span style="color:#0431fa">]</span>,</div><div class="no" style="left:0;width:33px;top:159.80px">11</div><div class="g" style="left:59.0px;top:160.00px;height:16.00px"></div><div class="g" style="left:85.4px;top:160.00px;height:16.00px"></div><div class="g" style="left:111.8px;top:160.00px;height:16.00px"></div><div class="ln" style="left:59px;top:159.80px"><span style="color:#0431fa">          [</span><span style="color:#a31515">&#x27;&#x27;</span>, <span style="color:#a31515">&#x27;<b>拾</b>&#x27;</span>, <span style="color:#a31515">&#x27;<b>佰</b>&#x27;</span>, <span style="color:#a31515">&#x27;<b>仟</b>&#x27;</span><span style="color:#0431fa">]</span></div><div class="no" style="left:0;width:33px;top:175.80px">12</div><div class="g" style="left:59.0px;top:176.00px;height:16.00px"></div><div class="g" style="left:85.4px;top:176.00px;height:16.00px"></div><div class="ln" style="left:59px;top:175.80px"><span style="color:#7b3814">      ]</span>;</div><div class="no" style="left:0;width:33px;top:191.80px">13</div><div class="g" style="left:59.0px;top:192.00px;height:16.00px"></div><div class="g" style="left:85.4px;top:192.00px;height:16.00px"></div><div class="ln" style="left:59px;top:191.80px"><span style="color:#0000ff">      var </span>head = n &lt; <span style="color:#098658">0 </span>? <span style="color:#a31515">&#x27;<b>欠</b>&#x27; </span>: <span style="color:#a31515">&#x27;&#x27;</span>;</div></div><svg class="ic" style="right:1px;bottom:1px" width="11" height="11" viewBox="0 0 11 11"><path d="M10.5 2 L2 10.5 M10.5 6.5 L6.5 10.5" stroke="#6b7280" stroke-width="1"/></svg></div>
<div class="abs" style="right:0;top:0;width:9px;bottom:0;background:#f3f4f6"></div>
<div class="abs" style="right:1.6px;top:327.1px;width:6.5px;height:460px;background:#c6c9d0;border-radius:3.5px"></div>
<svg class="ic" style="right:1.5px;top:6px" width="6" height="4" viewBox="0 0 6 4"><path d="M0 4 L3 0 L6 4Z" fill="#9ca3af"/></svg>
</div></div>
<div class="abs" style="left:0;top:0;width:1920px;height:951px;background:rgba(0,0,0,.5)"></div>
<div class="abs" style="left:384px;top:95.1px;width:1152px;height:760.8px;background:#fff;border-radius:8px;box-shadow:0 20px 25px -5px rgba(0,0,0,.18),0 8px 10px -6px rgba(0,0,0,.15);overflow:hidden">
<div class="abs" style="left:0;top:0;right:0;height:61px;border-bottom:1px solid #e5e7eb">
<div class="l" style="left:16px;top:14.6px;height:28px;font-size:18px;font-weight:700;color:#111827">自定义脚本</div>
<div class="c" style="left:114px;top:20px;width:82px;height:19px;background:#eceef1;border-radius:4px;font-family:'DejaVu Sans Mono','Noto Sans CJK SC',monospace;font-size:10.9px;color:#6b7280">javascript</div>
<svg class="ic" style="left:1119.4px;top:24.2px" width="10" height="10" viewBox="0 0 10 10" ><path d="M1 1 L9 9 M9 1 L1 9" stroke="#6b7280" stroke-width="1.5" stroke-linecap="round"/></svg>
</div>
<div class="ed big" style="left:0;top:61px;width:1152px;height:630.8px">
<div class="no" style="left:0;width:38px;top:1.20px">1</div><div class="ln" style="left:64px;top:1.20px"><span style="color:#008000">// RMB Uppercase Conversion</span></div><div class="no" style="left:0;width:38px;top:20.27px">2</div><div class="ln" style="left:64px;top:20.27px"><span style="color:#0000ff">try </span><span style="color:#0431fa">{</span></div><div class="no" style="left:0;width:38px;top:39.34px">3</div><div class="g" style="left:64.0px;top:38.14px;height:19.07px"></div><div class="ln" style="left:64px;top:39.34px"><span style="color:#0000ff">  function </span>digitUppercase<span style="color:#319331">(</span>n<span style="color:#319331">) {</span></div><div class="no" style="left:0;width:38px;top:58.41px">4</div><div class="g" style="left:64.0px;top:57.21px;height:19.07px"></div><div class="g" style="left:94.8px;top:57.21px;height:19.07px"></div><div class="ln" style="left:64px;top:58.41px"><span style="color:#0000ff">      var </span>fraction = <span style="color:#7b3814">[</span><span style="color:#a31515">&#x27;<b>角</b>&#x27;</span>, <span style="color:#a31515">&#x27;<b>分</b>&#x27;</span><span style="color:#7b3814">]</span>;</div><div class="no" style="left:0;width:38px;top:77.48px">5</div><div class="g" style="left:64.0px;top:76.28px;height:19.07px"></div><div class="g" style="left:94.8px;top:76.28px;height:19.07px"></div><div class="ln" style="left:64px;top:77.48px"><span style="color:#0000ff">      var </span>digit = <span style="color:#7b3814">[</span></div><div class="no" style="left:0;width:38px;top:96.55px">6</div><div class="g" style="left:64.0px;top:95.35px;height:19.07px"></div><div class="g" style="left:94.8px;top:95.35px;height:19.07px"></div><div class="g" style="left:125.6px;top:95.35px;height:19.07px"></div><div class="ln" style="left:64px;top:96.55px"><span style="color:#a31515">          &#x27;<b>零</b>&#x27;</span>, <span style="color:#a31515">&#x27;<b>壹</b>&#x27;</span>, <span style="color:#a31515">&#x27;<b>贰</b>&#x27;</span>, <span style="color:#a31515">&#x27;<b>叁</b>&#x27;</span>, <span style="color:#a31515">&#x27;<b>肆</b>&#x27;</span>,</div><div class="no" style="left:0;width:38px;top:115.62px">7</div><div class="g" style="left:64.0px;top:114.42px;height:19.07px"></div><div class="g" style="left:94.8px;top:114.42px;height:19.07px"></div><div class="g" style="left:125.6px;top:114.42px;height:19.07px"></div><div class="ln" style="left:64px;top:115.62px"><span style="color:#a31515">          &#x27;<b>伍</b>&#x27;</span>, <span style="color:#a31515">&#x27;<b>陆</b>&#x27;</span>, <span style="color:#a31515">&#x27;<b>柒</b>&#x27;</span>, <span style="color:#a31515">&#x27;<b>捌</b>&#x27;</span>, <span style="color:#a31515">&#x27;<b>玖</b>&#x27;</span></div><div class="no" style="left:0;width:38px;top:134.69px">8</div><div class="g" style="left:64.0px;top:133.49px;height:19.07px"></div><div class="g" style="left:94.8px;top:133.49px;height:19.07px"></div><div class="ln" style="left:64px;top:134.69px"><span style="color:#7b3814">      ]</span>;</div><div class="no" style="left:0;width:38px;top:153.76px">9</div><div class="g" style="left:64.0px;top:152.56px;height:19.07px"></div><div class="g" style="left:94.8px;top:152.56px;height:19.07px"></div><div class="ln" style="left:64px;top:153.76px"><span style="color:#0000ff">      var </span>unit = <span style="color:#7b3814">[</span></div><div class="no" style="left:0;width:38px;top:172.83px">10</div><div class="g" style="left:64.0px;top:171.63px;height:19.07px"></div><div class="g" style="left:94.8px;top:171.63px;height:19.07px"></div><div class="g" style="left:125.6px;top:171.63px;height:19.07px"></div><div class="ln" style="left:64px;top:172.83px"><span style="color:#0431fa">          [</span><span style="color:#a31515">&#x27;<b>元</b>&#x27;</span>, <span style="color:#a31515">&#x27;<b>万</b>&#x27;</span>, <span style="color:#a31515">&#x27;<b>亿</b>&#x27;</span><span style="color:#0431fa">]</span>,</div><div class="no" style="left:0;width:38px;top:191.90px">11</div><div class="g" style="left:64.0px;top:190.70px;height:19.07px"></div><div class="g" style="left:94.8px;top:190.70px;height:19.07px"></div><div class="g" style="left:125.6px;top:190.70px;height:19.07px"></div><div class="ln" style="left:64px;top:191.90px"><span style="color:#0431fa">          [</span><span style="color:#a31515">&#x27;&#x27;</span>, <span style="color:#a31515">&#x27;<b>拾</b>&#x27;</span>, <span style="color:#a31515">&#x27;<b>佰</b>&#x27;</span>, <span style="color:#a31515">&#x27;<b>仟</b>&#x27;</span><span style="color:#0431fa">]</span></div><div class="no" style="left:0;width:38px;top:210.97px">12</div><div class="g" style="left:64.0px;top:209.77px;height:19.07px"></div><div class="g" style="left:94.8px;top:209.77px;height:19.07px"></div><div class="ln" style="left:64px;top:210.97px"><span style="color:#7b3814">      ]</span>;</div><div class="no" style="left:0;width:38px;top:230.04px">13</div><div class="g" style="left:64.0px;top:228.84px;height:19.07px"></div><div class="g" style="left:94.8px;top:228.84px;height:19.07px"></div><div class="ln" style="left:64px;top:230.04px"><span style="color:#0000ff">      var </span>head = n &lt; <span style="color:#098658">0 </span>? <span style="color:#a31515">&#x27;<b>欠</b>&#x27; </span>: <span style="color:#a31515">&#x27;&#x27;</span>;</div><div class="no" style="left:0;width:38px;top:249.11px">14</div><div class="g" style="left:64.0px;top:247.91px;height:19.07px"></div><div class="g" style="left:94.8px;top:247.91px;height:19.07px"></div><div class="ln" style="left:64px;top:249.11px">      n = <span style="color:#267f99">Math</span>.abs<span style="color:#7b3814">(</span>n<span style="color:#7b3814">)</span>;</div><div class="no" style="left:0;width:38px;top:268.18px">15</div><div class="g" style="left:64.0px;top:266.98px;height:19.07px"></div><div class="g" style="left:94.8px;top:266.98px;height:19.07px"></div><div class="ln" style="left:64px;top:268.18px"><span style="color:#0000ff">      var </span>s = <span style="color:#a31515">&#x27;&#x27;</span>;</div><div class="no" style="left:0;width:38px;top:287.25px">16</div><div class="g" style="left:64.0px;top:286.05px;height:19.07px"></div><div class="g" style="left:94.8px;top:286.05px;height:19.07px"></div><div class="ln" style="left:64px;top:287.25px"><span style="color:#0000ff">      for </span><span style="color:#7b3814">(</span><span style="color:#0000ff">var </span>i = <span style="color:#098658">0</span>; i &lt; fraction.length; i++<span style="color:#7b3814">) {</span></div><div class="no" style="left:0;width:38px;top:306.32px">17</div><div class="g" style="left:64.0px;top:305.12px;height:19.07px"></div><div class="g" style="left:94.8px;top:305.12px;height:19.07px"></div><div class="g" style="left:125.6px;top:305.12px;height:19.07px"></div><div class="ln" style="left:64px;top:306.32px">          s += <span style="color:#0431fa">(</span>digit<span style="color:#319331">[</span><span style="color:#267f99">Math</span>.floor<span style="color:#7b3814">(</span>n * <span style="color:#098658">10 </span>* <span style="color:#267f99">Math</span>.pow<span style="color:#0431fa">(</span><span style="color:#098658">10</span>, i<span style="color:#0431fa">)</span><span style="color:#7b3814">) </span>% <span style="color:#098658">10</span><span style="color:#319331">] </span>+ fraction<span style="color:#319331">[</span>i<span style="color:#319331">]</span><span style="color:#0431fa">)</span>.replace<span style="color:#0431fa">(</span><span style="color:#811f3f">/<b>零</b>./</span>, <span style="color:#a31515">&#x27;&#x27;</span><span style="color:#0431fa">)</span>;</div><div class="no" style="left:0;width:38px;top:325.39px">18</div><div class="g" style="left:64.0px;top:324.19px;height:19.07px"></div><div class="g" style="left:94.8px;top:324.19px;height:19.07px"></div><div class="ln" style="left:64px;top:325.39px"><span style="color:#7b3814">      }</span></div><div class="no" style="left:0;width:38px;top:344.46px">19</div><div class="g" style="left:64.0px;top:343.26px;height:19.07px"></div><div class="g" style="left:94.8px;top:343.26px;height:19.07px"></div><div class="ln" style="left:64px;top:344.46px">      s = s || <span style="color:#a31515">&#x27;<b>整</b>&#x27;</span>;</div><div class="no" style="left:0;width:38px;top:363.53px">20</div><div class="g" style="left:64.0px;top:362.33px;height:19.07px"></div><div class="g" style="left:94.8px;top:362.33px;height:19.07px"></div><div class="ln" style="left:64px;top:363.53px">      n = <span style="color:#267f99">Math</span>.floor<span style="color:#7b3814">(</span>n<span style="color:#7b3814">)</span>;</div><div class="no" style="left:0;width:38px;top:382.60px">21</div><div class="g" style="left:64.0px;top:381.40px;height:19.07px"></div><div class="g" style="left:94.8px;top:381.40px;height:19.07px"></div><div class="ln" style="left:64px;top:382.60px"><span style="color:#0000ff">      for </span><span style="color:#7b3814">(</span><span style="color:#0000ff">var </span>i = <span style="color:#098658">0</span>; i &lt; unit<span style="color:#0431fa">[</span><span style="color:#098658">0</span><span style="color:#0431fa">]</span>.length &amp;&amp; n &gt; <span style="color:#098658">0</span>; i++<span style="color:#7b3814">) {</span></div><div class="no" style="left:0;width:38px;top:401.67px">22</div><div class="g" style="left:64.0px;top:400.47px;height:19.07px"></div><div class="g" style="left:94.8px;top:400.47px;height:19.07px"></div><div class="g" style="left:125.6px;top:400.47px;height:19.07px"></div><div class="ln" style="left:64px;top:401.67px"><span style="color:#0000ff">          var </span>p = <span style="color:#a31515">&#x27;&#x27;</span>;</div><div class="no" style="left:0;width:38px;top:420.74px">23</div><div class="g" style="left:64.0px;top:419.54px;height:19.07px"></div><div class="g" style="left:94.8px;top:419.54px;height:19.07px"></div><div class="g" style="left:125.6px;top:419.54px;height:19.07px"></div><div class="ln" style="left:64px;top:420.74px"><span style="color:#0000ff">          for </span><span style="color:#0431fa">(</span><span style="color:#0000ff">var </span>j = <span style="color:#098658">0</span>; j &lt; unit<span style="color:#319331">[</span><span style="color:#098658">1</span><span style="color:#319331">]</span>.length &amp;&amp; n &gt; <span style="color:#098658">0</span>; j++<span style="color:#0431fa">) {</span></div><div class="no" style="left:0;width:38px;top:439.81px">24</div><div class="g" style="left:64.0px;top:438.61px;height:19.07px"></div><div class="g" style="left:94.8px;top:438.61px;height:19.07px"></div><div class="g" style="left:125.6px;top:438.61px;height:19.07px"></div><div class="g" style="left:156.4px;top:438.61px;height:19.07px"></div><div class="ln" style="left:64px;top:439.81px">              p = digit<span style="color:#319331">[</span>n % <span style="color:#098658">10</span><span style="color:#319331">] </span>+ unit<span style="color:#319331">[</span><span style="color:#098658">1</span><span style="color:#319331">][</span>j<span style="color:#319331">] </span>+ p;</div><div class="no" style="left:0;width:38px;top:458.88px">25</div><div class="g" style="left:64.0px;top:457.68px;height:19.07px"></div><div class="g" style="left:94.8px;top:457.68px;height:19.07px"></div><div class="g" style="left:125.6px;top:457.68px;height:19.07px"></div><div class="g" style="left:156.4px;top:457.68px;height:19.07px"></div><div class="ln" style="left:64px;top:458.88px">              n = <span style="color:#267f99">Math</span>.floor<span style="color:#319331">(</span>n / <span style="color:#098658">10</span><span style="color:#319331">)</span>;</div><div class="no" style="left:0;width:38px;top:477.95px">26</div><div class="g" style="left:64.0px;top:476.75px;height:19.07px"></div><div class="g" style="left:94.8px;top:476.75px;height:19.07px"></div><div class="g" style="left:125.6px;top:476.75px;height:19.07px"></div><div class="ln" style="left:64px;top:477.95px"><span style="color:#0431fa">          }</span></div><div class="no" style="left:0;width:38px;top:497.02px">27</div><div class="g" style="left:64.0px;top:495.82px;height:19.07px"></div><div class="g" style="left:94.8px;top:495.82px;height:19.07px"></div><div class="g" style="left:125.6px;top:495.82px;height:19.07px"></div><div class="ln" style="left:64px;top:497.02px">          s = p.replace<span style="color:#0431fa">(</span><span style="color:#811f3f">/(<b>零</b>.)*<b>零</b>$/</span>, <span style="color:#a31515">&#x27;&#x27;</span><span style="color:#0431fa">)</span>.replace<span style="color:#0431fa">(</span><span style="color:#811f3f">/^$/</span>, <span style="color:#a31515">&#x27;<b>零</b>&#x27;</span><span style="color:#0431fa">) </span>+ unit<span style="color:#0431fa">[</span><span style="color:#098658">0</span><span style="color:#0431fa">][</span>i<span style="color:#0431fa">] </span>+ s;</div><div class="no" style="left:0;width:38px;top:516.09px">28</div><div class="g" style="left:64.0px;top:514.89px;height:19.07px"></div><div class="g" style="left:94.8px;top:514.89px;height:19.07px"></div><div class="ln" style="left:64px;top:516.09px"><span style="color:#7b3814">      }</span></div><div class="no" style="left:0;width:38px;top:535.16px">29</div><div class="g" style="left:64.0px;top:533.96px;height:19.07px"></div><div class="g" style="left:94.8px;top:533.96px;height:19.07px"></div><div class="ln" style="left:64px;top:535.16px"><span style="color:#0000ff">      return </span>head + s.replace<span style="color:#7b3814">(</span><span style="color:#811f3f">/(<b>零</b>.)*<b>零</b><b>元</b>/</span>, <span style="color:#a31515">&#x27;<b>元</b>&#x27;</span><span style="color:#7b3814">)</span></div><div class="no" style="left:0;width:38px;top:554.23px">30</div><div class="g" style="left:64.0px;top:553.03px;height:19.07px"></div><div class="g" style="left:94.8px;top:553.03px;height:19.07px"></div><div class="g" style="left:125.6px;top:553.03px;height:19.07px"></div><div class="ln" style="left:64px;top:554.23px">          .replace<span style="color:#7b3814">(</span><span style="color:#811f3f">/(<b>零</b>.)+/</span><span style="color:#0000ff">g</span>, <span style="color:#a31515">&#x27;<b>零</b>&#x27;</span><span style="color:#7b3814">)</span></div><div class="no" style="left:0;width:38px;top:573.30px">31</div><div class="g" style="left:64.0px;top:572.10px;height:19.07px"></div><div class="g" style="left:94.8px;top:572.10px;height:19.07px"></div><div class="g" style="left:125.6px;top:572.10px;height:19.07px"></div><div class="ln" style="left:64px;top:573.30px">          .replace<span style="color:#7b3814">(</span><span style="color:#811f3f">/^<b>整</b>$/</span>, <span style="color:#a31515">&#x27;<b>零</b><b>元</b><b>整</b>&#x27;</span><span style="color:#7b3814">)</span>;</div><div class="no" style="left:0;width:38px;top:592.37px">32</div><div class="g" style="left:64.0px;top:591.17px;height:19.07px"></div><div class="ln" style="left:64px;top:592.37px"><span style="color:#319331">  }</span></div><div class="no" style="left:0;width:38px;top:611.44px">33</div><div class="g" style="left:64.0px;top:610.24px;height:19.07px"></div><div class="no" style="left:0;width:38px;top:630.51px">34</div><div class="g" style="left:64.0px;top:629.31px;height:19.07px"></div><div class="ln" style="left:64px;top:630.51px"><span style="color:#008000">  // Example: sum the rows and write totals</span></div>
<svg class="ic" style="left:1025px;top:0" width="113" height="630" viewBox="0 0 113 630"><rect x="0" y="0" width="2" height="2" fill="#008000" fill-opacity=".38"/><rect x="3" y="0" width="3" height="2" fill="#008000" fill-opacity=".38"/><rect x="7" y="0" width="9" height="2" fill="#008000" fill-opacity=".38"/><rect x="17" y="0" width="10" height="2" fill="#008000" fill-opacity=".38"/><rect x="0" y="2" width="3" height="2" fill="#0000ff" fill-opacity=".38"/><rect x="4" y="2" width="1" height="2" fill="#0431fa" fill-opacity=".38"/><rect x="2" y="4" width="8" height="2" fill="#0000ff" fill-opacity=".38"/><rect x="11" y="4" width="14" height="2" fill="#000000" fill-opacity=".5"/><rect x="25" y="4" width="1" height="2" fill="#319331" fill-opacity=".38"/><rect x="26" y="4" width="1" height="2" fill="#000000" fill-opacity=".5"/><rect x="27" y="4" width="1" height="2" fill="#319331" fill-opacity=".38"/><rect x="29" y="4" width="1" height="2" fill="#319331" fill-opacity=".38"/><rect x="6" y="6" width="3" height="2" fill="#0000ff" fill-opacity=".38"/><rect x="10" y="6" width="8" height="2" fill="#000000" fill-opacity=".5"/><rect x="19" y="6" width="1" height="2" fill="#000000" fill-opacity=".5"/><rect x="21" y="6" width="1" height="2" fill="#7b3814" fill-opacity=".38"/><rect x="22" y="6" width="4" height="2" fill="#a31515" fill-opacity=".38"/><rect x="26" y="6" width="1" height="2" fill="#000000" fill-opacity=".5"/><rect x="28" y="6" width="4" height="2" fill="#a31515" fill-opacity=".38"/><rect x="32" y="6" width="1" height="2" fill="#7b3814" fill-opacity=".38"/><rect x="33" y="6" width="1" height="2" fill="#000000" fill-opacity=".5"/><rect x="6" y="8" width="3" height="2" fill="#0000ff" fill-opacity=".38"/><rect x="10" y="8" width="5" height="2" fill="#000000" fill-opacity=".5"/><rect x="16" y="8" width="1" height="2" fill="#000000" fill-opacity=".5"/><rect x="18" y="8" width="1" height="2" fill="#7b3814" fill-opacity=".38"/><rect x="10" y="10" width="4" height="2" fill="#a31515" fill-opacity=".38"/><rect x="14" y="10" width="1" height="2" fill="#000000" fill-opacity=".5"/><rect x="16" y="10" width="4" height="2" fill="#a31515" fill-opacity=".38"/><rect x="20" y="10" width="1" height="2" fill="#000000" fill-opacity=".5"/><rect x="22" y="10" width="4" height="2" fill="#a31515" fill-opacity=".38"/><rect x="26" y="10" width="1" height="2" fill="#000000" fill-opacity=".5"/><rect x="28" y="10" width="4" height="2" fill="#a31515" fill-opacity=".38"/><rect x="32" y="10" width="1" height="2" fill="#000000" fill-opacity=".5"/><rect x="34" y="10" width="4" height="2" fill="#a31515" fill-opacity=".38"/><rect x="38" y="10" width="1" height="2" fill="#000000" fill-opacity=".5"/><rect x="10" y="12" width="4" height="2" fill="#a31515" fill-opacity=".38"/><rect x="14" y="12" width="1" height="2" fill="#000000" fill-opacity=".5"/><rect x="16" y="12" width="4" height="2" fill="#a31515" fill-opacity=".38"/><rect x="20" y="12" width="1" height="2" fill="#000000" fill-opacity=".5"/><rect x="22" y="12" width="4" height="2" fill="#a31515" fill-opacity=".38"/><rect x="26" y="12" width="1" height="2" fill="#000000" fill-opacity=".5"/><rect x="28" y="12" width="4" height="2" fill="#a31515" fill-opacity=".38"/><rect x="32" y="12" width="1" height="2" fill="#000000" fill-opacity=".5"/><rect x="34" y="12" width="4" height="2" fill="#a31515" fill-opacity=".38"/><rect x="6" y="14" width="1" height="2" fill="#7b3814" fill-opacity=".38"/><rect x="7" y="14" width="1" height="2" fill="#000000" fill-opacity=".5"/><rect x="6" y="16" width="3" height="2" fill="#0000ff" fill-opacity=".38"/><rect x="10" y="16" width="4" height="2" fill="#000000" fill-opacity=".5"/><rect x="15" y="16" width="1" height="2" fill="#000000" fill-opacity=".5"/><rect x="17" y="16" width="1" height="2" fill="#7b3814" fill-opacity=".38"/><rect x="10" y="18" width="1" height="2" fill="#0431fa" fill-opacity=".38"/><rect x="11" y="18" width="4" height="2" fill="#a31515" fill-opacity=".38"/><rect x="15" y="18" width="1" height="2" fill="#000000" fill-opacity=".5"/><rect x="17" y="18" width="4" height="2" fill="#a31515" fill-opacity=".38"/><rect x="21" y="18" width="1" height="2" fill="#000000" fill-opacity=".5"/><rect x="23" y="18" width="4" height="2" fill="#a31515" fill-opacity=".38"/><rect x="27" y="18" width="1" height="2" fill="#0431fa" fill-opacity=".38"/><rect x="28" y="18" width="1" height="2" fill="#000000" fill-opacity=".5"/><rect x="10" y="20" width="1" height="2" fill="#0431fa" fill-opacity=".38"/><rect x="11" y="20" width="2" height="2" fill="#a31515" fill-opacity=".38"/><rect x="13" y="20" width="1" height="2" fill="#000000" fill-opacity=".5"/><rect x="15" y="20" width="4" height="2" fill="#a31515" fill-opacity=".38"/><rect x="19" y="20" width="1" height="2" fill="#000000" fill-opacity=".5"/><rect x="21" y="20" width="4" height="2" fill="#a31515" fill-opacity=".38"/><rect x="25" y="20" width="1" height="2" fill="#000000" fill-opacity=".5"/><rect x="27" y="20" width="4" height="2" fill="#a31515" fill-opacity=".38"/><rect x="31" y="20" width="1" height="2" fill="#0431fa" fill-opacity=".38"/><rect x="6" y="22" width="1" height="2" fill="#7b3814" fill-opacity=".38"/><rect x="7" y="22" width="1" height="2" fill="#000000" fill-opacity=".5"/><rect x="6" y="24" width="3" height="2" fill="#0000ff" fill-opacity=".38"/><rect x="10" y="24" width="4" height="2" fill="#000000" fill-opacity=".5"/><rect x="15" y="24" width="1" height="2" fill="#000000" fill-opacity=".5"/><rect x="17" y="24" width="1" height="2" fill="#000000" fill-opacity=".5"/><rect x="19" y="24" width="1" height="2" fill="#000000" fill-opacity=".5"/><rect x="21" y="24" width="1" height="2" fill="#098658" fill-opacity=".38"/><rect x="23" y="24" width="1" height="2" fill="#000000" fill-opacity=".5"/><rect x="25" y="24" width="4" height="2" fill="#a31515" fill-opacity=".38"/><rect x="30" y="24" width="1" height="2" fill="#000000" fill-opacity=".5"/><rect x="32" y="24" width="2" height="2" fill="#a31515" fill-opacity=".38"/><rect x="34" y="24" width="1" height="2" fill="#000000" fill-opacity=".5"/><rect x="6" y="26" width="1" height="2" fill="#000000" fill-opacity=".5"/><rect x="8" y="26" width="1" height="2" fill="#000000" fill-opacity=".5"/><rect x="10" y="26" width="4" height="2" fill="#267f99" fill-opacity=".38"/><rect x="14" y="26" width="1" height="2" fill="#000000" fill-opacity=".5"/><rect x="15" y="26" width="3" height="2" fill="#000000" fill-opacity=".5"/><rect x="18" y="26" width="1" height="2" fill="#7b3814" fill-opacity=".38"/><rect x="19" y="26" width="1" height="2" fill="#000000" fill-opacity=".5"/><rect x="20" y="26" width="1" height="2" fill="#7b3814" fill-opacity=".38"/><rect x="21" y="26" width="1" height="2" fill="#000000" fill-opacity=".5"/><rect x="6" y="28" width="3" height="2" fill="#0000ff" fill-opacity=".38"/><rect x="10" y="28" width="1" height="2" fill="#000000" fill-opacity=".5"/><rect x="12" y="28" width="1" height="2" fill="#000000" fill-opacity=".5"/><rect x="14" y="28" width="2" height="2" fill="#a31515" fill-opacity=".38"/><rect x="16" y="28" width="1" height="2" fill="#000000" fill-opacity=".5"/><rect x="6" y="30" width="3" height="2" fill="#0000ff" fill-opacity=".38"/><rect x="10" y="30" width="1" height="2" fill="#7b3814" fill-opacity=".38"/><rect x="11" y="30" width="3" height="2" fill="#0000ff" fill-opacity=".38"/><rect x="15" y="30" width="1" height="2" fill="#000000" fill-opacity=".5"/><rect x="17" y="30" width="1" height="2" fill="#000000" fill-opacity=".5"/><rect x="19" y="30" width="1" height="2" fill="#098658" fill-opacity=".38"/><rect x="20" y="30" width="1" height="2" fill="#000000" fill-opacity=".5"/><rect x="22" y="30" width="1" height="2" fill="#000000" fill-opacity=".5"/><rect x="24" y="30" width="1" height="2" fill="#000000" fill-opacity=".5"/><rect x="26" y="30" width="8" height="2" fill="#000000" fill-opacity=".5"/><rect x="34" y="30" width="1" height="2" fill="#000000" fill-opacity=".5"/><rect x="35" y="30" width="6" height="2" fill="#000000" fill-opacity=".5"/><rect x="41" y="30" width="1" height="2" fill="#000000" fill-opacity=".5"/><rect x="43" y="30" width="1" height="2" fill="#000000" fill-opacity=".5"/><rect x="44" y="30" width="1" height="2" fill="#000000" fill-opacity=".5"/><rect x="45" y="30" width="1" height="2" fill="#000000" fill-opacity=".5"/><rect x="46" y="30" width="1" height="2" fill="#7b3814" fill-opacity=".38"/><rect x="48" y="30" width="1" height="2" fill="#7b3814" fill-opacity=".38"/><rect x="10" y="32" width="1" height="2" fill="#000000" fill-opacity=".5"/><rect x="12" y="32" width="1" height="2" fill="#000000" fill-opacity=".5"/><rect x="13" y="32" width="1" height="2" fill="#000000" fill-opacity=".5"/><rect x="15" y="32" width="1" height="2" fill="#0431fa" fill-opacity=".38"/><rect x="16" y="32" width="5" height="2" fill="#000000" fill-opacity=".5"/><rect x="21" y="32" width="1" height="2" fill="#319331" fill-opacity=".38"/><rect x="22" y="32" width="4" height="2" fill="#267f99" fill-opacity=".38"/><rect x="26" y="32" width="1" height="2" fill="#000000" fill-opacity=".5"/><rect x="27" y="32" width="5" height="2" fill="#000000" fill-opacity=".5"/><rect x="32" y="32" width="1" height="2" fill="#7b3814" fill-opacity=".38"/><rect x="33" y="32" width="1" height="2" fill="#000000" fill-opacity=".5"/><rect x="35" y="32" width="1" height="2" fill="#000000" fill-opacity=".5"/><rect x="37" y="32" width="2" height="2" fill="#098658" fill-opacity=".38"/><rect x="40" y="32" width="1" height="2" fill="#000000" fill-opacity=".5"/><rect x="42" y="32" width="4" height="2" fill="#267f99" fill-opacity=".38"/><rect x="46" y="32" width="1" height="2" fill="#000000" fill-opacity=".5"/><rect x="47" y="32" width="3" height="2" fill="#000000" fill-opacity=".5"/><rect x="50" y="32" width="1" height="2" fill="#0431fa" fill-opacity=".38"/><rect x="51" y="32" width="2" height="2" fill="#098658" fill-opacity=".38"/><rect x="53" y="32" width="1" height="2" fill="#000000" fill-opacity=".5"/><rect x="55" y="32" width="1" height="2" fill="#000000" fill-opacity=".5"/><rect x="56" y="32" width="1" height="2" fill="#0431fa" fill-opacity=".38"/><rect x="57" y="32" width="1" height="2" fill="#7b3814" fill-opacity=".38"/><rect x="59" y="32" width="1" height="2" fill="#000000" fill-opacity=".5"/><rect x="61" y="32" width="2" height="2" fill="#098658" fill-opacity=".38"/><rect x="63" y="32" width="1" height="2" fill="#319331" fill-opacity=".38"/><rect x="65" y="32" width="1" height="2" fill="#000000" fill-opacity=".5"/><rect x="67" y="32" width="8" height="2" fill="#000000" fill-opacity=".5"/><rect x="75" y="32" width="1" height="2" fill="#319331" fill-opacity=".38"/><rect x="76" y="32" width="1" height="2" fill="#000000" fill-opacity=".5"/><rect x="77" y="32" width="1" height="2" fill="#319331" fill-opacity=".38"/><rect x="78" y="32" width="1" height="2" fill="#0431fa" fill-opacity=".38"/><rect x="79" y="32" width="1" height="2" fill="#000000" fill-opacity=".5"/><rect x="80" y="32" width="7" height="2" fill="#000000" fill-opacity=".5"/><rect x="87" y="32" width="1" height="2" fill="#0431fa" fill-opacity=".38"/><rect x="88" y="32" width="5" height="2" fill="#811f3f" fill-opacity=".38"/><rect x="93" y="32" width="1" height="2" fill="#000000" fill-opacity=".5"/><rect x="95" y="32" width="2" height="2" fill="#a31515" fill-opacity=".38"/><rect x="97" y="32" width="1" height="2" fill="#0431fa" fill-opacity=".38"/><rect x="98" y="32" width="1" height="2" fill="#000000" fill-opacity=".5"/><rect x="6" y="34" width="1" height="2" fill="#7b3814" fill-opacity=".38"/><rect x="6" y="36" width="1" height="2" fill="#000000" fill-opacity=".5"/><rect x="8" y="36" width="1" height="2" fill="#000000" fill-opacity=".5"/><rect x="10" y="36" width="1" height="2" fill="#000000" fill-opacity=".5"/><rect x="12" y="36" width="1" height="2" fill="#000000" fill-opacity=".5"/><rect x="13" y="36" width="1" height="2" fill="#000000" fill-opacity=".5"/><rect x="15" y="36" width="4" height="2" fill="#a31515" fill-opacity=".38"/><rect x="19" y="36" width="1" height="2" fill="#000000" fill-opacity=".5"/><rect x="6" y="38" width="1" height="2" fill="#000000" fill-opacity=".5"/><rect x="8" y="38" width="1" height="2" fill="#000000" fill-opacity=".5"/><rect x="10" y="38" width="4" height="2" fill="#267f99" fill-opacity=".38"/><rect x="14" y="38" width="1" height="2" fill="#000000" fill-opacity=".5"/><rect x="15" y="38" width="5" height="2" fill="#000000" fill-opacity=".5"/><rect x="20" y="38" width="1" height="2" fill="#7b3814" fill-opacity=".38"/><rect x="21" y="38" width="1" height="2" fill="#000000" fill-opacity=".5"/><rect x="22" y="38" width="1" height="2" fill="#7b3814" fill-opacity=".38"/><rect x="23" y="38" width="1" height="2" fill="#000000" fill-opacity=".5"/><rect x="6" y="40" width="3" height="2" fill="#0000ff" fill-opacity=".38"/><rect x="10" y="40" width="1" height="2" fill="#7b3814" fill-opacity=".38"/><rect x="11" y="40" width="3" height="2" fill="#0000ff" fill-opacity=".38"/><rect x="15" y="40" width="1" height="2" fill="#000000" fill-opacity=".5"/><rect x="17" y="40" width="1" height="2" fill="#000000" fill-opacity=".5"/><rect x="19" y="40" width="1" height="2" fill="#098658" fill-opacity=".38"/><rect x="20" y="40" width="1" height="2" fill="#000000" fill-opacity=".5"/><rect x="22" y="40" width="1" height="2" fill="#000000" fill-opacity=".5"/><rect x="24" y="40" width="1" height="2" fill="#000000" fill-opacity=".5"/><rect x="26" y="40" width="4" height="2" fill="#000000" fill-opacity=".5"/><rect x="30" y="40" width="1" height="2" fill="#0431fa" fill-opacity=".38"/><rect x="31" y="40" width="1" height="2" fill="#098658" fill-opacity=".38"/><rect x="32" y="40" width="1" height="2" fill="#0431fa" fill-opacity=".38"/><rect x="33" y="40" width="1" height="2" fill="#000000" fill-opacity=".5"/><rect x="34" y="40" width="6" height="2" fill="#000000" fill-opacity=".5"/><rect x="41" y="40" width="1" height="2" fill="#000000" fill-opacity=".5"/><rect x="42" y="40" width="1" height="2" fill="#000000" fill-opacity=".5"/><rect x="44" y="40" width="1" height="2" fill="#000000" fill-opacity=".5"/><rect x="46" y="40" width="1" height="2" fill="#000000" fill-opacity=".5"/><rect x="48" y="40" width="1" height="2" fill="#098658" fill-opacity=".38"/><rect x="49" y="40" width="1" height="2" fill="#000000" fill-opacity=".5"/><rect x="51" y="40" width="1" height="2" fill="#000000" fill-opacity=".5"/><rect x="52" y="40" width="1" height="2" fill="#000000" fill-opacity=".5"/><rect x="53" y="40" width="1" height="2" fill="#000000" fill-opacity=".5"/><rect x="54" y="40" width="1" height="2" fill="#7b3814" fill-opacity=".38"/><rect x="56" y="40" width="1" height="2" fill="#7b3814" fill-opacity=".38"/><rect x="10" y="42" width="3" height="2" fill="#0000ff" fill-opacity=".38"/><rect x="14" y="42" width="1" height="2" fill="#000000" fill-opacity=".5"/><rect x="16" y="42" width="1" height="2" fill="#000000" fill-opacity=".5"/><rect x="18" y="42" width="2" height="2" fill="#a31515" fill-opacity=".38"/><rect x="20" y="42" width="1" height="2" fill="#000000" fill-opacity=".5"/><rect x="10" y="44" width="3" height="2" fill="#0000ff" fill-opacity=".38"/><rect x="14" y="44" width="1" height="2" fill="#0431fa" fill-opacity=".38"/><rect x="15" y="44" width="3" height="2" fill="#0000ff" fill-opacity=".38"/><rect x="19" y="44" width="1" height="2" fill="#000000" fill-opacity=".5"/><rect x="21" y="44" width="1" height="2" fill="#000000" fill-opacity=".5"/><rect x="23" y="44" width="1" height="2" fill="#098658" fill-opacity=".38"/><rect x="24" y="44" width="1" height="2" fill="#000000" fill-opacity=".5"/><rect x="26" y="44" width="1" height="2" fill="#000000" fill-opacity=".5"/><rect x="28" y="44" width="1" height="2" fill="#000000" fill-opacity=".5"/><rect x="30" y="44" width="4" height="2" fill="#000000" fill-opacity=".5"/><rect x="34" y="44" width="1" height="2" fill="#319331" fill-opacity=".38"/><rect x="35" y="44" width="1" height="2" fill="#098658" fill-opacity=".38"/><rect x="36" y="44" width="1" height="2" fill="#319331" fill-opacity=".38"/><rect x="37" y="44" width="1" height="2" fill="#000000" fill-opacity=".5"/><rect x="38" y="44" width="6" height="2" fill="#000000" fill-opacity=".5"/><rect x="45" y="44" width="1" height="2" fill="#000000" fill-opacity=".5"/><rect x="46" y="44" width="1" height="2" fill="#000000" fill-opacity=".5"/><rect x="48" y="44" width="1" height="2" fill="#000000" fill-opacity=".5"/><rect x="50" y="44" width="1" height="2" fill="#000000" fill-opacity=".5"/><rect x="52" y="44" width="1" height="2" fill="#098658" fill-opacity=".38"/><rect x="53" y="44" width="1" height="2" fill="#000000" fill-opacity=".5"/><rect x="55" y="44" width="1" height="2" fill="#000000" fill-opacity=".5"/><rect x="56" y="44" width="1" height="2" fill="#000000" fill-opacity=".5"/><rect x="57" y="44" width="1" height="2" fill="#000000" fill-opacity=".5"/><rect x="58" y="44" width="1" height="2" fill="#0431fa" fill-opacity=".38"/><rect x="60" y="44" width="1" height="2" fill="#0431fa" fill-opacity=".38"/><rect x="14" y="46" width="1" height="2" fill="#000000" fill-opacity=".5"/><rect x="16" y="46" width="1" height="2" fill="#000000" fill-opacity=".5"/><rect x="18" y="46" width="5" height="2" fill="#000000" fill-opacity=".5"/><rect x="23" y="46" width="1" height="2" fill="#319331" fill-opacity=".38"/><rect x="24" y="46" width="1" height="2" fill="#000000" fill-opacity=".5"/><rect x="26" y="46" width="1" height="2" fill="#000000" fill-opacity=".5"/><rect x="28" y="46" width="2" height="2" fill="#098658" fill-opacity=".38"/><rect x="30" y="46" width="1" height="2" fill="#319331" fill-opacity=".38"/><rect x="32" y="46" width="1" height="2" fill="#000000" fill-opacity=".5"/><rect x="34" y="46" width="4" height="2" fill="#000000" fill-opacity=".5"/><rect x="38" y="46" width="1" height="2" fill="#319331" fill-opacity=".38"/><rect x="39" y="46" width="1" height="2" fill="#098658" fill-opacity=".38"/><rect x="40" y="46" width="1" height="2" fill="#319331" fill-opacity=".38"/><rect x="41" y="46" width="1" height="2" fill="#319331" fill-opacity=".38"/><rect x="42" y="46" width="1" height="2" fill="#000000" fill-opacity=".5"/><rect x="43" y="46" width="1" height="2" fill="#319331" fill-opacity=".38"/><rect x="45" y="46" width="1" height="2" fill="#000000" fill-opacity=".5"/><rect x="47" y="46" width="1" height="2" fill="#000000" fill-opacity=".5"/><rect x="48" y="46" width="1" height="2" fill="#000000" fill-opacity=".5"/><rect x="14" y="48" width="1" height="2" fill="#000000" fill-opacity=".5"/><rect x="16" y="48" width="1" height="2" fill="#000000" fill-opacity=".5"/><rect x="18" y="48" width="4" height="2" fill="#267f99" fill-opacity=".38"/><rect x="22" y="48" width="1" height="2" fill="#000000" fill-opacity=".5"/><rect x="23" y="48" width="5" height="2" fill="#000000" fill-opacity=".5"/><rect x="28" y="48" width="1" height="2" fill="#319331" fill-opacity=".38"/><rect x="29" y="48" width="1" height="2" fill="#000000" fill-opacity=".5"/><rect x="31" y="48" width="1" height="2" fill="#000000" fill-opacity=".5"/><rect x="33" y="48" width="2" height="2" fill="#098658" fill-opacity=".38"/><rect x="35" y="48" width="1" height="2" fill="#319331" fill-opacity=".38"/><rect x="36" y="48" width="1" height="2" fill="#000000" fill-opacity=".5"/><rect x="10" y="50" width="1" height="2" fill="#0431fa" fill-opacity=".38"/><rect x="10" y="52" width="1" height="2" fill="#000000" fill-opacity=".5"/><rect x="12" y="52" width="1" height="2" fill="#000000" fill-opacity=".5"/><rect x="14" y="52" width="1" height="2" fill="#000000" fill-opacity=".5"/><rect x="15" y="52" width="1" height="2" fill="#000000" fill-opacity=".5"/><rect x="16" y="52" width="7" height="2" fill="#000000" fill-opacity=".5"/><rect x="23" y="52" width="1" height="2" fill="#0431fa" fill-opacity=".38"/><rect x="24" y="52" width="11" height="2" fill="#811f3f" fill-opacity=".38"/><rect x="35" y="52" width="1" height="2" fill="#000000" fill-opacity=".5"/><rect x="37" y="52" width="2" height="2" fill="#a31515" fill-opacity=".38"/><rect x="39" y="52" width="1" height="2" fill="#0431fa" fill-opacity=".38"/><rect x="40" y="52" width="1" height="2" fill="#000000" fill-opacity=".5"/><rect x="41" y="52" width="7" height="2" fill="#000000" fill-opacity=".5"/><rect x="48" y="52" width="1" height="2" fill="#0431fa" fill-opacity=".38"/><rect x="49" y="52" width="4" height="2" fill="#811f3f" fill-opacity=".38"/><rect x="53" y="52" width="1" height="2" fill="#000000" fill-opacity=".5"/><rect x="55" y="52" width="4" height="2" fill="#a31515" fill-opacity=".38"/><rect x="59" y="52" width="1" height="2" fill="#0431fa" fill-opacity=".38"/><rect x="61" y="52" width="1" height="2" fill="#000000" fill-opacity=".5"/><rect x="63" y="52" width="4" height="2" fill="#000000" fill-opacity=".5"/><rect x="67" y="52" width="1" height="2" fill="#0431fa" fill-opacity=".38"/><rect x="68" y="52" width="1" height="2" fill="#098658" fill-opacity=".38"/><rect x="69" y="52" width="1" height="2" fill="#0431fa" fill-opacity=".38"/><rect x="70" y="52" width="1" height="2" fill="#0431fa" fill-opacity=".38"/><rect x="71" y="52" width="1" height="2" fill="#000000" fill-opacity=".5"/><rect x="72" y="52" width="1" height="2" fill="#0431fa" fill-opacity=".38"/><rect x="74" y="52" width="1" height="2" fill="#000000" fill-opacity=".5"/><rect x="76" y="52" width="1" height="2" fill="#000000" fill-opacity=".5"/><rect x="77" y="52" width="1" height="2" fill="#000000" fill-opacity=".5"/><rect x="6" y="54" width="1" height="2" fill="#7b3814" fill-opacity=".38"/><rect x="6" y="56" width="6" height="2" fill="#0000ff" fill-opacity=".38"/><rect x="13" y="56" width="4" height="2" fill="#000000" fill-opacity=".5"/><rect x="18" y="56" width="1" height="2" fill="#000000" fill-opacity=".5"/><rect x="20" y="56" width="1" height="2" fill="#000000" fill-opacity=".5"/><rect x="21" y="56" width="1" height="2" fill="#000000" fill-opacity=".5"/><rect x="22" y="56" width="7" height="2" fill="#000000" fill-opacity=".5"/><rect x="29" y="56" width="1" height="2" fill="#7b3814" fill-opacity=".38"/><rect x="30" y="56" width="12" height="2" fill="#811f3f" fill-opacity=".38"/><rect x="42" y="56" width="1" height="2" fill="#000000" fill-opacity=".5"/><rect x="44" y="56" width="4" height="2" fill="#a31515" fill-opacity=".38"/><rect x="48" y="56" width="1" height="2" fill="#7b3814" fill-opacity=".38"/><rect x="10" y="58" width="1" height="2" fill="#000000" fill-opacity=".5"/><rect x="11" y="58" width="7" height="2" fill="#000000" fill-opacity=".5"/><rect x="18" y="58" width="1" height="2" fill="#7b3814" fill-opacity=".38"/><rect x="19" y="58" width="8" height="2" fill="#811f3f" fill-opacity=".38"/><rect x="27" y="58" width="1" height="2" fill="#0000ff" fill-opacity=".38"/><rect x="28" y="58" width="1" height="2" fill="#000000" fill-opacity=".5"/><rect x="30" y="58" width="4" height="2" fill="#a31515" fill-opacity=".38"/><rect x="34" y="58" width="1" height="2" fill="#7b3814" fill-opacity=".38"/><rect x="10" y="60" width="1" height="2" fill="#000000" fill-opacity=".5"/><rect x="11" y="60" width="7" height="2" fill="#000000" fill-opacity=".5"/><rect x="18" y="60" width="1" height="2" fill="#7b3814" fill-opacity=".38"/><rect x="19" y="60" width="6" height="2" fill="#811f3f" fill-opacity=".38"/><rect x="25" y="60" width="1" height="2" fill="#000000" fill-opacity=".5"/><rect x="27" y="60" width="8" height="2" fill="#a31515" fill-opacity=".38"/><rect x="35" y="60" width="1" height="2" fill="#7b3814" fill-opacity=".38"/><rect x="36" y="60" width="1" height="2" fill="#000000" fill-opacity=".5"/><rect x="2" y="62" width="1" height="2" fill="#319331" fill-opacity=".38"/><rect x="1" y="66" width="6" height="2" fill="#008000" fill-opacity=".38"/><rect x="8" y="66" width="4" height="2" fill="#008000" fill-opacity=".38"/><rect x="13" y="66" width="6" height="2" fill="#008000" fill-opacity=".38"/><rect x="20" y="66" width="2" height="2" fill="#008000" fill-opacity=".38"/><rect x="23" y="66" width="8" height="2" fill="#008000" fill-opacity=".38"/><rect x="32" y="66" width="3" height="2" fill="#008000" fill-opacity=".38"/><rect x="36" y="66" width="2" height="2" fill="#008000" fill-opacity=".38"/><rect x="39" y="66" width="5" height="2" fill="#008000" fill-opacity=".38"/><rect x="45" y="66" width="4" height="2" fill="#008000" fill-opacity=".38"/><rect x="50" y="66" width="2" height="2" fill="#008000" fill-opacity=".38"/><rect x="53" y="66" width="5" height="2" fill="#008000" fill-opacity=".38"/><rect x="59" y="66" width="2" height="2" fill="#008000" fill-opacity=".38"/><rect x="2" y="68" width="3" height="2" fill="#0000ff" fill-opacity=".38"/><rect x="6" y="68" width="4" height="2" fill="#000000" fill-opacity=".5"/><rect x="11" y="68" width="1" height="2" fill="#000000" fill-opacity=".5"/><rect x="13" y="68" width="4" height="2" fill="#000000" fill-opacity=".5"/><rect x="18" y="68" width="2" height="2" fill="#000000" fill-opacity=".5"/><rect x="21" y="68" width="2" height="2" fill="#7b3814" fill-opacity=".38"/><rect x="2" y="70" width="3" height="2" fill="#0000ff" fill-opacity=".38"/><rect x="6" y="70" width="5" height="2" fill="#000000" fill-opacity=".5"/><rect x="12" y="70" width="1" height="2" fill="#000000" fill-opacity=".5"/><rect x="14" y="70" width="1" height="2" fill="#098658" fill-opacity=".38"/><rect x="2" y="72" width="3" height="2" fill="#0000ff" fill-opacity=".38"/><rect x="6" y="72" width="3" height="2" fill="#000000" fill-opacity=".5"/><rect x="10" y="72" width="1" height="2" fill="#000000" fill-opacity=".5"/><rect x="12" y="72" width="1" height="2" fill="#098658" fill-opacity=".38"/><rect x="2" y="74" width="3" height="2" fill="#0000ff" fill-opacity=".38"/><rect x="6" y="74" width="5" height="2" fill="#000000" fill-opacity=".5"/><rect x="12" y="74" width="1" height="2" fill="#000000" fill-opacity=".5"/><rect x="14" y="74" width="4" height="2" fill="#000000" fill-opacity=".5"/><rect x="19" y="74" width="6" height="2" fill="#000000" fill-opacity=".5"/><rect x="2" y="76" width="12" height="2" fill="#000000" fill-opacity=".5"/><rect x="15" y="76" width="8" height="2" fill="#0000ff" fill-opacity=".38"/><rect x="24" y="76" width="1" height="2" fill="#319331" fill-opacity=".38"/><rect x="26" y="76" width="3" height="2" fill="#000000" fill-opacity=".5"/><rect x="30" y="76" width="1" height="2" fill="#319331" fill-opacity=".38"/><rect x="32" y="76" width="1" height="2" fill="#319331" fill-opacity=".38"/><rect x="6" y="78" width="5" height="2" fill="#000000" fill-opacity=".5"/><rect x="12" y="78" width="2" height="2" fill="#000000" fill-opacity=".5"/><rect x="15" y="78" width="6" height="2" fill="#267f99" fill-opacity=".38"/><rect x="22" y="78" width="9" height="2" fill="#000000" fill-opacity=".5"/><rect x="32" y="78" width="2" height="2" fill="#000000" fill-opacity=".5"/><rect x="35" y="78" width="1" height="2" fill="#098658" fill-opacity=".38"/><rect x="6" y="80" width="3" height="2" fill="#000000" fill-opacity=".5"/><rect x="10" y="80" width="2" height="2" fill="#000000" fill-opacity=".5"/><rect x="13" y="80" width="6" height="2" fill="#267f99" fill-opacity=".38"/><rect x="20" y="80" width="7" height="2" fill="#000000" fill-opacity=".5"/><rect x="28" y="80" width="2" height="2" fill="#000000" fill-opacity=".5"/><rect x="31" y="80" width="1" height="2" fill="#098658" fill-opacity=".38"/><rect x="2" y="82" width="2" height="2" fill="#319331" fill-opacity=".38"/><rect x="5" y="82" width="1" height="2" fill="#000000" fill-opacity=".5"/><rect x="2" y="84" width="3" height="2" fill="#000000" fill-opacity=".5"/><rect x="6" y="84" width="1" height="2" fill="#000000" fill-opacity=".5"/><rect x="8" y="84" width="5" height="2" fill="#000000" fill-opacity=".5"/><rect x="14" y="84" width="1" height="2" fill="#000000" fill-opacity=".5"/><rect x="16" y="84" width="4" height="2" fill="#267f99" fill-opacity=".38"/><rect x="21" y="84" width="12" height="2" fill="#000000" fill-opacity=".5"/><rect x="34" y="84" width="1" height="2" fill="#000000" fill-opacity=".5"/><rect x="36" y="84" width="1" height="2" fill="#098658" fill-opacity=".38"/><rect x="0" y="88" width="1" height="2" fill="#0431fa" fill-opacity=".38"/><rect x="5" y="94" width="6" height="2" fill="#008000" fill-opacity=".38"/><rect x="12" y="94" width="4" height="2" fill="#008000" fill-opacity=".38"/><rect x="17" y="94" width="3" height="2" fill="#008000" fill-opacity=".38"/><rect x="21" y="94" width="6" height="2" fill="#008000" fill-opacity=".38"/><rect x="4" y="96" width="3" height="2" fill="#0000ff" fill-opacity=".38"/><rect x="8" y="96" width="4" height="2" fill="#000000" fill-opacity=".5"/><rect x="13" y="96" width="1" height="2" fill="#000000" fill-opacity=".5"/><rect x="15" y="96" width="8" height="2" fill="#0000ff" fill-opacity=".38"/><rect x="24" y="96" width="4" height="2" fill="#319331" fill-opacity=".38"/><rect x="29" y="96" width="1" height="2" fill="#319331" fill-opacity=".38"/><rect x="8" y="98" width="6" height="2" fill="#0000ff" fill-opacity=".38"/><rect x="15" y="98" width="15" height="2" fill="#000000" fill-opacity=".5"/><rect x="31" y="98" width="8" height="2" fill="#0000ff" fill-opacity=".38"/><rect x="40" y="98" width="3" height="2" fill="#7b3814" fill-opacity=".38"/><rect x="44" y="98" width="1" height="2" fill="#7b3814" fill-opacity=".38"/><rect x="12" y="100" width="6" height="2" fill="#0000ff" fill-opacity=".38"/><rect x="19" y="100" width="4" height="2" fill="#000000" fill-opacity=".5"/><rect x="24" y="100" width="3" height="2" fill="#000000" fill-opacity=".5"/><rect x="28" y="100" width="2" height="2" fill="#000000" fill-opacity=".5"/><rect x="8" y="102" width="2" height="2" fill="#7b3814" fill-opacity=".38"/><rect x="11" y="102" width="1" height="2" fill="#319331" fill-opacity=".38"/><rect x="13" y="102" width="1" height="2" fill="#098658" fill-opacity=".38"/><rect x="15" y="102" width="1" height="2" fill="#000000" fill-opacity=".5"/><rect x="4" y="104" width="1" height="2" fill="#319331" fill-opacity=".38"/><rect x="6" y="104" width="1" height="2" fill="#000000" fill-opacity=".5"/><rect x="4" y="106" width="3" height="2" fill="#0000ff" fill-opacity=".38"/><rect x="8" y="106" width="5" height="2" fill="#000000" fill-opacity=".5"/><rect x="14" y="106" width="1" height="2" fill="#000000" fill-opacity=".5"/><rect x="16" y="106" width="4" height="2" fill="#000000" fill-opacity=".5"/><rect x="21" y="106" width="9" height="2" fill="#a31515" fill-opacity=".38"/><rect x="4" y="108" width="2" height="2" fill="#0000ff" fill-opacity=".38"/><rect x="7" y="108" width="7" height="2" fill="#319331" fill-opacity=".38"/><rect x="15" y="108" width="1" height="2" fill="#319331" fill-opacity=".38"/><rect x="13" y="110" width="8" height="2" fill="#008000" fill-opacity=".38"/><rect x="22" y="110" width="6" height="2" fill="#008000" fill-opacity=".38"/><rect x="29" y="110" width="2" height="2" fill="#008000" fill-opacity=".38"/><rect x="32" y="110" width="5" height="2" fill="#008000" fill-opacity=".38"/><rect x="38" y="110" width="4" height="2" fill="#008000" fill-opacity=".38"/><rect x="14" y="112" width="4" height="2" fill="#a31515" fill-opacity=".38"/><rect x="19" y="112" width="9" height="2" fill="#a31515" fill-opacity=".38"/><rect x="29" y="112" width="2" height="2" fill="#000000" fill-opacity=".5"/><rect x="32" y="112" width="6" height="2" fill="#000000" fill-opacity=".5"/><rect x="39" y="112" width="5" height="2" fill="#a31515" fill-opacity=".38"/><rect x="45" y="112" width="9" height="2" fill="#000000" fill-opacity=".5"/><rect x="55" y="112" width="4" height="2" fill="#267f99" fill-opacity=".38"/><rect x="60" y="112" width="4" height="2" fill="#a31515" fill-opacity=".38"/><rect x="65" y="112" width="2" height="2" fill="#267f99" fill-opacity=".38"/><rect x="68" y="112" width="4" height="2" fill="#000000" fill-opacity=".5"/><rect x="73" y="112" width="6" height="2" fill="#0000ff" fill-opacity=".38"/><rect x="80" y="112" width="6" height="2" fill="#0000ff" fill-opacity=".38"/><rect x="87" y="112" width="8" height="2" fill="#000000" fill-opacity=".5"/><rect x="96" y="112" width="8" height="2" fill="#267f99" fill-opacity=".38"/><rect x="105" y="112" width="1" height="2" fill="#000000" fill-opacity=".5"/><rect x="14" y="114" width="3" height="2" fill="#a31515" fill-opacity=".38"/><rect x="18" y="114" width="4" height="2" fill="#0000ff" fill-opacity=".38"/><rect x="23" y="114" width="5" height="2" fill="#000000" fill-opacity=".5"/><rect x="29" y="114" width="8" height="2" fill="#000000" fill-opacity=".5"/><rect x="38" y="114" width="8" height="2" fill="#000000" fill-opacity=".5"/><rect x="47" y="114" width="7" height="2" fill="#267f99" fill-opacity=".38"/><rect x="55" y="114" width="5" height="2" fill="#267f99" fill-opacity=".38"/><rect x="61" y="114" width="2" height="2" fill="#a31515" fill-opacity=".38"/><rect x="64" y="114" width="4" height="2" fill="#000000" fill-opacity=".5"/><rect x="69" y="114" width="3" height="2" fill="#a31515" fill-opacity=".38"/><rect x="73" y="114" width="6" height="2" fill="#a31515" fill-opacity=".38"/><rect x="80" y="114" width="3" height="2" fill="#000000" fill-opacity=".5"/><rect x="84" y="114" width="9" height="2" fill="#000000" fill-opacity=".5"/><rect x="94" y="114" width="3" height="2" fill="#000000" fill-opacity=".5"/><rect x="98" y="114" width="3" height="2" fill="#a31515" fill-opacity=".38"/><rect x="102" y="114" width="2" height="2" fill="#267f99" fill-opacity=".38"/><rect x="14" y="116" width="6" height="2" fill="#0000ff" fill-opacity=".38"/><rect x="21" y="116" width="8" height="2" fill="#267f99" fill-opacity=".38"/><rect x="30" y="116" width="2" height="2" fill="#000000" fill-opacity=".5"/><rect x="33" y="116" width="8" height="2" fill="#0000ff" fill-opacity=".38"/><rect x="42" y="116" width="6" height="2" fill="#a31515" fill-opacity=".38"/><rect x="49" y="116" width="2" height="2" fill="#a31515" fill-opacity=".38"/><rect x="52" y="116" width="2" height="2" fill="#000000" fill-opacity=".5"/><rect x="55" y="116" width="3" height="2" fill="#000000" fill-opacity=".5"/><rect x="59" y="116" width="5" height="2" fill="#0000ff" fill-opacity=".38"/><rect x="65" y="116" width="6" height="2" fill="#267f99" fill-opacity=".38"/><rect x="72" y="116" width="4" height="2" fill="#000000" fill-opacity=".5"/><rect x="77" y="116" width="7" height="2" fill="#0000ff" fill-opacity=".38"/><rect x="85" y="116" width="7" height="2" fill="#a31515" fill-opacity=".38"/><rect x="93" y="116" width="7" height="2" fill="#000000" fill-opacity=".5"/><rect x="14" y="118" width="9" height="2" fill="#267f99" fill-opacity=".38"/><rect x="24" y="118" width="3" height="2" fill="#267f99" fill-opacity=".38"/><rect x="28" y="118" width="8" height="2" fill="#000000" fill-opacity=".5"/><rect x="37" y="118" width="6" height="2" fill="#a31515" fill-opacity=".38"/><rect x="44" y="118" width="6" height="2" fill="#267f99" fill-opacity=".38"/><rect x="51" y="118" width="7" height="2" fill="#000000" fill-opacity=".5"/><rect x="59" y="118" width="8" height="2" fill="#0000ff" fill-opacity=".38"/><rect x="68" y="118" width="2" height="2" fill="#a31515" fill-opacity=".38"/><rect x="71" y="118" width="4" height="2" fill="#267f99" fill-opacity=".38"/><rect x="76" y="118" width="7" height="2" fill="#0000ff" fill-opacity=".38"/><rect x="84" y="118" width="7" height="2" fill="#000000" fill-opacity=".5"/><rect x="92" y="118" width="4" height="2" fill="#a31515" fill-opacity=".38"/><rect x="14" y="120" width="2" height="2" fill="#000000" fill-opacity=".5"/><rect x="17" y="120" width="2" height="2" fill="#0000ff" fill-opacity=".38"/><rect x="20" y="120" width="6" height="2" fill="#a31515" fill-opacity=".38"/><rect x="27" y="120" width="6" height="2" fill="#000000" fill-opacity=".5"/><rect x="34" y="120" width="4" height="2" fill="#a31515" fill-opacity=".38"/><rect x="39" y="120" width="4" height="2" fill="#a31515" fill-opacity=".38"/><rect x="44" y="120" width="7" height="2" fill="#a31515" fill-opacity=".38"/><rect x="52" y="120" width="6" height="2" fill="#000000" fill-opacity=".5"/><rect x="59" y="120" width="3" height="2" fill="#267f99" fill-opacity=".38"/><rect x="63" y="120" width="4" height="2" fill="#0000ff" fill-opacity=".38"/><rect x="68" y="120" width="2" height="2" fill="#000000" fill-opacity=".5"/><rect x="12" y="122" width="2" height="2" fill="#7b3814" fill-opacity=".38"/><rect x="16" y="124" width="5" height="2" fill="#008000" fill-opacity=".38"/><rect x="22" y="124" width="5" height="2" fill="#008000" fill-opacity=".38"/><rect x="28" y="124" width="4" height="2" fill="#008000" fill-opacity=".38"/><rect x="33" y="124" width="4" height="2" fill="#008000" fill-opacity=".38"/><rect x="38" y="124" width="5" height="2" fill="#008000" fill-opacity=".38"/><rect x="44" y="124" width="7" height="2" fill="#008000" fill-opacity=".38"/><rect x="52" y="124" width="2" height="2" fill="#008000" fill-opacity=".38"/><rect x="55" y="124" width="5" height="2" fill="#008000" fill-opacity=".38"/><rect x="61" y="124" width="7" height="2" fill="#008000" fill-opacity=".38"/><rect x="69" y="124" width="2" height="2" fill="#008000" fill-opacity=".38"/><rect x="72" y="124" width="2" height="2" fill="#008000" fill-opacity=".38"/><rect x="75" y="124" width="7" height="2" fill="#008000" fill-opacity=".38"/><rect x="83" y="124" width="3" height="2" fill="#008000" fill-opacity=".38"/><rect x="87" y="124" width="4" height="2" fill="#008000" fill-opacity=".38"/><rect x="92" y="124" width="2" height="2" fill="#008000" fill-opacity=".38"/><rect x="95" y="124" width="5" height="2" fill="#008000" fill-opacity=".38"/><rect x="18" y="126" width="6" height="2" fill="#000000" fill-opacity=".5"/><rect x="25" y="126" width="7" height="2" fill="#000000" fill-opacity=".5"/><rect x="33" y="126" width="8" height="2" fill="#000000" fill-opacity=".5"/><rect x="42" y="126" width="3" height="2" fill="#000000" fill-opacity=".5"/><rect x="46" y="126" width="7" height="2" fill="#000000" fill-opacity=".5"/><rect x="54" y="126" width="5" height="2" fill="#a31515" fill-opacity=".38"/><rect x="60" y="126" width="4" height="2" fill="#000000" fill-opacity=".5"/><rect x="65" y="126" width="7" height="2" fill="#000000" fill-opacity=".5"/><rect x="73" y="126" width="5" height="2" fill="#000000" fill-opacity=".5"/><rect x="79" y="126" width="9" height="2" fill="#0000ff" fill-opacity=".38"/><rect x="18" y="128" width="5" height="2" fill="#a31515" fill-opacity=".38"/><rect x="24" y="128" width="3" height="2" fill="#a31515" fill-opacity=".38"/><rect x="28" y="128" width="5" height="2" fill="#000000" fill-opacity=".5"/><rect x="34" y="128" width="4" height="2" fill="#a31515" fill-opacity=".38"/><rect x="39" y="128" width="6" height="2" fill="#a31515" fill-opacity=".38"/><rect x="46" y="128" width="3" height="2" fill="#a31515" fill-opacity=".38"/><rect x="50" y="128" width="7" height="2" fill="#a31515" fill-opacity=".38"/><rect x="58" y="128" width="4" height="2" fill="#0000ff" fill-opacity=".38"/><rect x="63" y="128" width="6" height="2" fill="#000000" fill-opacity=".5"/><rect x="70" y="128" width="6" height="2" fill="#0000ff" fill-opacity=".38"/><rect x="77" y="128" width="7" height="2" fill="#000000" fill-opacity=".5"/><rect x="85" y="128" width="1" height="2" fill="#000000" fill-opacity=".5"/><rect x="18" y="130" width="8" height="2" fill="#a31515" fill-opacity=".38"/><rect x="27" y="130" width="8" height="2" fill="#0000ff" fill-opacity=".38"/><rect x="36" y="130" width="8" height="2" fill="#000000" fill-opacity=".5"/><rect x="45" y="130" width="5" height="2" fill="#000000" fill-opacity=".5"/><rect x="51" y="130" width="9" height="2" fill="#000000" fill-opacity=".5"/><rect x="61" y="130" width="8" height="2" fill="#a31515" fill-opacity=".38"/><rect x="70" y="130" width="5" height="2" fill="#0000ff" fill-opacity=".38"/><rect x="76" y="130" width="9" height="2" fill="#000000" fill-opacity=".5"/><rect x="86" y="130" width="4" height="2" fill="#a31515" fill-opacity=".38"/><rect x="18" y="132" width="7" height="2" fill="#0000ff" fill-opacity=".38"/><rect x="26" y="132" width="3" height="2" fill="#000000" fill-opacity=".5"/><rect x="30" y="132" width="6" height="2" fill="#a31515" fill-opacity=".38"/><rect x="37" y="132" width="5" height="2" fill="#000000" fill-opacity=".5"/><rect x="43" y="132" width="2" height="2" fill="#000000" fill-opacity=".5"/><rect x="46" y="132" width="5" height="2" fill="#a31515" fill-opacity=".38"/><rect x="52" y="132" width="2" height="2" fill="#000000" fill-opacity=".5"/><rect x="55" y="132" width="9" height="2" fill="#000000" fill-opacity=".5"/><rect x="65" y="132" width="3" height="2" fill="#000000" fill-opacity=".5"/><rect x="69" y="132" width="6" height="2" fill="#000000" fill-opacity=".5"/><rect x="76" y="132" width="2" height="2" fill="#000000" fill-opacity=".5"/><rect x="79" y="132" width="3" height="2" fill="#0000ff" fill-opacity=".38"/><rect x="18" y="134" width="3" height="2" fill="#000000" fill-opacity=".5"/><rect x="22" y="134" width="4" height="2" fill="#a31515" fill-opacity=".38"/><rect x="27" y="134" width="9" height="2" fill="#a31515" fill-opacity=".38"/><rect x="37" y="134" width="2" height="2" fill="#a31515" fill-opacity=".38"/><rect x="40" y="134" width="5" height="2" fill="#a31515" fill-opacity=".38"/><rect x="46" y="134" width="3" height="2" fill="#000000" fill-opacity=".5"/><rect x="50" y="134" width="3" height="2" fill="#0000ff" fill-opacity=".38"/><rect x="54" y="134" width="5" height="2" fill="#000000" fill-opacity=".5"/><rect x="60" y="134" width="6" height="2" fill="#a31515" fill-opacity=".38"/><rect x="67" y="134" width="4" height="2" fill="#a31515" fill-opacity=".38"/><rect x="72" y="134" width="2" height="2" fill="#a31515" fill-opacity=".38"/><rect x="75" y="134" width="3" height="2" fill="#000000" fill-opacity=".5"/><rect x="18" y="136" width="6" height="2" fill="#000000" fill-opacity=".5"/><rect x="25" y="136" width="6" height="2" fill="#000000" fill-opacity=".5"/><rect x="32" y="136" width="8" height="2" fill="#0000ff" fill-opacity=".38"/><rect x="41" y="136" width="9" height="2" fill="#000000" fill-opacity=".5"/><rect x="51" y="136" width="2" height="2" fill="#a31515" fill-opacity=".38"/><rect x="54" y="136" width="2" height="2" fill="#a31515" fill-opacity=".38"/><rect x="57" y="136" width="4" height="2" fill="#a31515" fill-opacity=".38"/><rect x="62" y="136" width="3" height="2" fill="#000000" fill-opacity=".5"/><rect x="66" y="136" width="3" height="2" fill="#000000" fill-opacity=".5"/><rect x="18" y="138" width="2" height="2" fill="#000000" fill-opacity=".5"/><rect x="21" y="138" width="3" height="2" fill="#a31515" fill-opacity=".38"/><rect x="25" y="138" width="9" height="2" fill="#0000ff" fill-opacity=".38"/><rect x="35" y="138" width="4" height="2" fill="#a31515" fill-opacity=".38"/><rect x="40" y="138" width="3" height="2" fill="#a31515" fill-opacity=".38"/><rect x="44" y="138" width="8" height="2" fill="#a31515" fill-opacity=".38"/><rect x="53" y="138" width="7" height="2" fill="#000000" fill-opacity=".5"/><rect x="18" y="142" width="3" height="2" fill="#0000ff" fill-opacity=".38"/><rect x="22" y="142" width="8" height="2" fill="#000000" fill-opacity=".5"/><rect x="31" y="142" width="12" height="2" fill="#000000" fill-opacity=".5"/><rect x="44" y="142" width="9" height="2" fill="#000000" fill-opacity=".5"/><rect x="54" y="142" width="14" height="2" fill="#000000" fill-opacity=".5"/><rect x="69" y="142" width="4" height="2" fill="#000000" fill-opacity=".5"/><rect x="16" y="150" width="4" height="2" fill="#008000" fill-opacity=".38"/><rect x="21" y="150" width="5" height="2" fill="#008000" fill-opacity=".38"/><rect x="27" y="150" width="3" height="2" fill="#008000" fill-opacity=".38"/><rect x="18" y="152" width="7" height="2" fill="#267f99" fill-opacity=".38"/><rect x="26" y="152" width="5" height="2" fill="#267f99" fill-opacity=".38"/><rect x="32" y="152" width="8" height="2" fill="#000000" fill-opacity=".5"/><rect x="41" y="152" width="4" height="2" fill="#000000" fill-opacity=".5"/><rect x="46" y="152" width="8" height="2" fill="#000000" fill-opacity=".5"/><rect x="55" y="152" width="4" height="2" fill="#000000" fill-opacity=".5"/><rect x="60" y="152" width="7" height="2" fill="#000000" fill-opacity=".5"/><rect x="68" y="152" width="8" height="2" fill="#0000ff" fill-opacity=".38"/><rect x="77" y="152" width="8" height="2" fill="#000000" fill-opacity=".5"/><rect x="18" y="154" width="7" height="2" fill="#000000" fill-opacity=".5"/><rect x="26" y="154" width="7" height="2" fill="#0000ff" fill-opacity=".38"/><rect x="34" y="154" width="8" height="2" fill="#a31515" fill-opacity=".38"/><rect x="43" y="154" width="2" height="2" fill="#0000ff" fill-opacity=".38"/><rect x="46" y="154" width="5" height="2" fill="#000000" fill-opacity=".5"/><rect x="52" y="154" width="3" height="2" fill="#267f99" fill-opacity=".38"/><rect x="56" y="154" width="5" height="2" fill="#a31515" fill-opacity=".38"/><rect x="62" y="154" width="4" height="2" fill="#a31515" fill-opacity=".38"/><rect x="67" y="154" width="7" height="2" fill="#000000" fill-opacity=".5"/><rect x="75" y="154" width="6" height="2" fill="#000000" fill-opacity=".5"/><rect x="82" y="154" width="6" height="2" fill="#000000" fill-opacity=".5"/><rect x="18" y="156" width="8" height="2" fill="#000000" fill-opacity=".5"/><rect x="27" y="156" width="7" height="2" fill="#000000" fill-opacity=".5"/><rect x="35" y="156" width="2" height="2" fill="#000000" fill-opacity=".5"/><rect x="38" y="156" width="4" height="2" fill="#0000ff" fill-opacity=".38"/><rect x="43" y="156" width="8" height="2" fill="#000000" fill-opacity=".5"/><rect x="52" y="156" width="3" height="2" fill="#000000" fill-opacity=".5"/><rect x="56" y="156" width="8" height="2" fill="#000000" fill-opacity=".5"/><rect x="65" y="156" width="2" height="2" fill="#a31515" fill-opacity=".38"/><rect x="68" y="156" width="3" height="2" fill="#000000" fill-opacity=".5"/><rect x="72" y="156" width="3" height="2" fill="#000000" fill-opacity=".5"/><rect x="76" y="156" width="6" height="2" fill="#0000ff" fill-opacity=".38"/><rect x="83" y="156" width="1" height="2" fill="#267f99" fill-opacity=".38"/><rect x="18" y="158" width="5" height="2" fill="#000000" fill-opacity=".5"/><rect x="24" y="158" width="3" height="2" fill="#000000" fill-opacity=".5"/><rect x="28" y="158" width="7" height="2" fill="#000000" fill-opacity=".5"/><rect x="36" y="158" width="3" height="2" fill="#a31515" fill-opacity=".38"/><rect x="40" y="158" width="4" height="2" fill="#000000" fill-opacity=".5"/><rect x="45" y="158" width="9" height="2" fill="#000000" fill-opacity=".5"/><rect x="55" y="158" width="6" height="2" fill="#a31515" fill-opacity=".38"/><rect x="62" y="158" width="8" height="2" fill="#000000" fill-opacity=".5"/><rect x="71" y="158" width="8" height="2" fill="#000000" fill-opacity=".5"/><rect x="80" y="158" width="8" height="2" fill="#000000" fill-opacity=".5"/><rect x="89" y="158" width="1" height="2" fill="#000000" fill-opacity=".5"/><rect x="18" y="160" width="8" height="2" fill="#a31515" fill-opacity=".38"/><rect x="27" y="160" width="4" height="2" fill="#0000ff" fill-opacity=".38"/><rect x="32" y="160" width="4" height="2" fill="#a31515" fill-opacity=".38"/><rect x="37" y="160" width="3" height="2" fill="#a31515" fill-opacity=".38"/><rect x="41" y="160" width="9" height="2" fill="#0000ff" fill-opacity=".38"/><rect x="51" y="160" width="4" height="2" fill="#0000ff" fill-opacity=".38"/><rect x="56" y="160" width="6" height="2" fill="#a31515" fill-opacity=".38"/><rect x="63" y="160" width="4" height="2" fill="#000000" fill-opacity=".5"/><rect x="68" y="160" width="5" height="2" fill="#000000" fill-opacity=".5"/><rect x="74" y="160" width="6" height="2" fill="#267f99" fill-opacity=".38"/><rect x="18" y="162" width="5" height="2" fill="#267f99" fill-opacity=".38"/><rect x="24" y="162" width="2" height="2" fill="#267f99" fill-opacity=".38"/><rect x="27" y="162" width="9" height="2" fill="#267f99" fill-opacity=".38"/><rect x="37" y="162" width="5" height="2" fill="#a31515" fill-opacity=".38"/><rect x="43" y="162" width="7" height="2" fill="#a31515" fill-opacity=".38"/><rect x="51" y="162" width="7" height="2" fill="#000000" fill-opacity=".5"/><rect x="59" y="162" width="4" height="2" fill="#0000ff" fill-opacity=".38"/><rect x="64" y="162" width="8" height="2" fill="#a31515" fill-opacity=".38"/><rect x="18" y="164" width="9" height="2" fill="#000000" fill-opacity=".5"/><rect x="28" y="164" width="9" height="2" fill="#000000" fill-opacity=".5"/><rect x="38" y="164" width="8" height="2" fill="#000000" fill-opacity=".5"/><rect x="47" y="164" width="9" height="2" fill="#000000" fill-opacity=".5"/><rect x="57" y="164" width="3" height="2" fill="#000000" fill-opacity=".5"/><rect x="18" y="168" width="3" height="2" fill="#0000ff" fill-opacity=".38"/><rect x="22" y="168" width="8" height="2" fill="#000000" fill-opacity=".5"/><rect x="31" y="168" width="12" height="2" fill="#000000" fill-opacity=".5"/><rect x="44" y="168" width="9" height="2" fill="#000000" fill-opacity=".5"/><rect x="54" y="168" width="14" height="2" fill="#000000" fill-opacity=".5"/><rect x="69" y="168" width="4" height="2" fill="#000000" fill-opacity=".5"/><rect x="13" y="172" width="3" height="2" fill="#008000" fill-opacity=".38"/><rect x="17" y="172" width="7" height="2" fill="#008000" fill-opacity=".38"/><rect x="25" y="172" width="3" height="2" fill="#008000" fill-opacity=".38"/><rect x="29" y="172" width="8" height="2" fill="#008000" fill-opacity=".38"/><rect x="38" y="172" width="1" height="2" fill="#008000" fill-opacity=".38"/><rect x="14" y="174" width="5" height="2" fill="#000000" fill-opacity=".5"/><rect x="20" y="174" width="5" height="2" fill="#0000ff" fill-opacity=".38"/><rect x="26" y="174" width="6" height="2" fill="#000000" fill-opacity=".5"/><rect x="33" y="174" width="4" height="2" fill="#a31515" fill-opacity=".38"/><rect x="38" y="174" width="6" height="2" fill="#0000ff" fill-opacity=".38"/><rect x="45" y="174" width="2" height="2" fill="#a31515" fill-opacity=".38"/><rect x="48" y="174" width="4" height="2" fill="#a31515" fill-opacity=".38"/><rect x="53" y="174" width="3" height="2" fill="#267f99" fill-opacity=".38"/><rect x="57" y="174" width="3" height="2" fill="#000000" fill-opacity=".5"/><rect x="61" y="174" width="6" height="2" fill="#000000" fill-opacity=".5"/><rect x="68" y="174" width="2" height="2" fill="#0000ff" fill-opacity=".38"/><rect x="71" y="174" width="9" height="2" fill="#a31515" fill-opacity=".38"/><rect x="81" y="174" width="2" height="2" fill="#a31515" fill-opacity=".38"/><rect x="84" y="174" width="7" height="2" fill="#0000ff" fill-opacity=".38"/><rect x="92" y="174" width="8" height="2" fill="#a31515" fill-opacity=".38"/><rect x="14" y="176" width="9" height="2" fill="#267f99" fill-opacity=".38"/><rect x="24" y="176" width="5" height="2" fill="#000000" fill-opacity=".5"/><rect x="30" y="176" width="8" height="2" fill="#000000" fill-opacity=".5"/><rect x="39" y="176" width="7" height="2" fill="#a31515" fill-opacity=".38"/><rect x="47" y="176" width="6" height="2" fill="#000000" fill-opacity=".5"/><rect x="54" y="176" width="8" height="2" fill="#000000" fill-opacity=".5"/><rect x="63" y="176" width="9" height="2" fill="#000000" fill-opacity=".5"/><rect x="73" y="176" width="3" height="2" fill="#0000ff" fill-opacity=".38"/><rect x="77" y="176" width="7" height="2" fill="#a31515" fill-opacity=".38"/><rect x="85" y="176" width="6" height="2" fill="#000000" fill-opacity=".5"/><rect x="92" y="176" width="3" height="2" fill="#0000ff" fill-opacity=".38"/><rect x="96" y="176" width="2" height="2" fill="#a31515" fill-opacity=".38"/><rect x="14" y="178" width="7" height="2" fill="#000000" fill-opacity=".5"/><rect x="22" y="178" width="6" height="2" fill="#0000ff" fill-opacity=".38"/><rect x="29" y="178" width="4" height="2" fill="#a31515" fill-opacity=".38"/><rect x="34" y="178" width="7" height="2" fill="#a31515" fill-opacity=".38"/><rect x="42" y="178" width="3" height="2" fill="#000000" fill-opacity=".5"/><rect x="46" y="178" width="4" height="2" fill="#000000" fill-opacity=".5"/><rect x="51" y="178" width="8" height="2" fill="#a31515" fill-opacity=".38"/><rect x="60" y="178" width="4" height="2" fill="#0000ff" fill-opacity=".38"/><rect x="65" y="178" width="9" height="2" fill="#000000" fill-opacity=".5"/><rect x="75" y="178" width="4" height="2" fill="#0000ff" fill-opacity=".38"/><rect x="80" y="178" width="3" height="2" fill="#000000" fill-opacity=".5"/><rect x="84" y="178" width="8" height="2" fill="#a31515" fill-opacity=".38"/><rect x="14" y="180" width="3" height="2" fill="#a31515" fill-opacity=".38"/><rect x="18" y="180" width="6" height="2" fill="#0000ff" fill-opacity=".38"/><rect x="25" y="180" width="2" height="2" fill="#267f99" fill-opacity=".38"/><rect x="28" y="180" width="2" height="2" fill="#a31515" fill-opacity=".38"/><rect x="31" y="180" width="6" height="2" fill="#000000" fill-opacity=".5"/><rect x="38" y="180" width="7" height="2" fill="#000000" fill-opacity=".5"/><rect x="46" y="180" width="8" height="2" fill="#a31515" fill-opacity=".38"/><rect x="55" y="180" width="3" height="2" fill="#000000" fill-opacity=".5"/><rect x="59" y="180" width="9" height="2" fill="#a31515" fill-opacity=".38"/><rect x="69" y="180" width="4" height="2" fill="#000000" fill-opacity=".5"/><rect x="10" y="184" width="1" height="2" fill="#0431fa" fill-opacity=".38"/><rect x="12" y="184" width="4" height="2" fill="#0000ff" fill-opacity=".38"/><rect x="10" y="190" width="4" height="2" fill="#008000" fill-opacity=".38"/><rect x="15" y="190" width="4" height="2" fill="#008000" fill-opacity=".38"/><rect x="20" y="190" width="7" height="2" fill="#008000" fill-opacity=".38"/><rect x="28" y="190" width="3" height="2" fill="#008000" fill-opacity=".38"/><rect x="12" y="192" width="2" height="2" fill="#0000ff" fill-opacity=".38"/><rect x="15" y="192" width="1" height="2" fill="#319331" fill-opacity=".38"/><rect x="17" y="192" width="6" height="2" fill="#000000" fill-opacity=".5"/><rect x="24" y="192" width="12" height="2" fill="#a31515" fill-opacity=".38"/><rect x="37" y="192" width="1" height="2" fill="#319331" fill-opacity=".38"/><rect x="24" y="194" width="4" height="2" fill="#008000" fill-opacity=".38"/><rect x="29" y="194" width="6" height="2" fill="#008000" fill-opacity=".38"/><rect x="36" y="194" width="8" height="2" fill="#008000" fill-opacity=".38"/><rect x="45" y="194" width="2" height="2" fill="#008000" fill-opacity=".38"/><rect x="48" y="194" width="4" height="2" fill="#008000" fill-opacity=".38"/><rect x="53" y="194" width="5" height="2" fill="#008000" fill-opacity=".38"/><rect x="59" y="194" width="2" height="2" fill="#008000" fill-opacity=".38"/><rect x="62" y="194" width="5" height="2" fill="#008000" fill-opacity=".38"/><rect x="68" y="194" width="4" height="2" fill="#008000" fill-opacity=".38"/><rect x="73" y="194" width="1" height="2" fill="#008000" fill-opacity=".38"/><rect x="16" y="196" width="6" height="2" fill="#267f99" fill-opacity=".38"/><rect x="23" y="196" width="12" height="2" fill="#000000" fill-opacity=".5"/><rect x="36" y="196" width="9" height="2" fill="#000000" fill-opacity=".5"/><rect x="46" y="196" width="8" height="2" fill="#000000" fill-opacity=".5"/><rect x="16" y="200" width="6" height="2" fill="#008000" fill-opacity=".38"/><rect x="23" y="200" width="8" height="2" fill="#008000" fill-opacity=".38"/><rect x="32" y="200" width="3" height="2" fill="#008000" fill-opacity=".38"/><rect x="36" y="200" width="6" height="2" fill="#008000" fill-opacity=".38"/><rect x="43" y="200" width="4" height="2" fill="#008000" fill-opacity=".38"/><rect x="48" y="200" width="5" height="2" fill="#008000" fill-opacity=".38"/><rect x="54" y="200" width="2" height="2" fill="#008000" fill-opacity=".38"/><rect x="57" y="200" width="7" height="2" fill="#008000" fill-opacity=".38"/><rect x="65" y="200" width="6" height="2" fill="#008000" fill-opacity=".38"/><rect x="72" y="200" width="3" height="2" fill="#008000" fill-opacity=".38"/><rect x="76" y="200" width="6" height="2" fill="#008000" fill-opacity=".38"/><rect x="83" y="200" width="3" height="2" fill="#008000" fill-opacity=".38"/><rect x="87" y="200" width="1" height="2" fill="#008000" fill-opacity=".38"/><rect x="16" y="202" width="3" height="2" fill="#008000" fill-opacity=".38"/><rect x="20" y="202" width="7" height="2" fill="#008000" fill-opacity=".38"/><rect x="28" y="202" width="6" height="2" fill="#008000" fill-opacity=".38"/><rect x="35" y="202" width="4" height="2" fill="#008000" fill-opacity=".38"/><rect x="40" y="202" width="3" height="2" fill="#008000" fill-opacity=".38"/><rect x="44" y="202" width="6" height="2" fill="#008000" fill-opacity=".38"/><rect x="51" y="202" width="7" height="2" fill="#008000" fill-opacity=".38"/><rect x="59" y="202" width="7" height="2" fill="#008000" fill-opacity=".38"/><rect x="18" y="206" width="2" height="2" fill="#0000ff" fill-opacity=".38"/><rect x="21" y="206" width="1" height="2" fill="#7b3814" fill-opacity=".38"/><rect x="23" y="206" width="10" height="2" fill="#000000" fill-opacity=".5"/><rect x="34" y="206" width="9" height="2" fill="#000000" fill-opacity=".5"/><rect x="44" y="206" width="14" height="2" fill="#000000" fill-opacity=".5"/><rect x="59" y="206" width="6" height="2" fill="#000000" fill-opacity=".5"/><rect x="66" y="206" width="1" height="2" fill="#7b3814" fill-opacity=".38"/><rect x="20" y="208" width="12" height="2" fill="#000000" fill-opacity=".5"/><rect x="33" y="208" width="9" height="2" fill="#000000" fill-opacity=".5"/><rect x="43" y="208" width="8" height="2" fill="#000000" fill-opacity=".5"/><rect x="52" y="208" width="6" height="2" fill="#008000" fill-opacity=".38"/><rect x="59" y="208" width="4" height="2" fill="#008000" fill-opacity=".38"/><rect x="64" y="208" width="6" height="2" fill="#008000" fill-opacity=".38"/><rect x="71" y="208" width="8" height="2" fill="#008000" fill-opacity=".38"/><rect x="80" y="208" width="2" height="2" fill="#008000" fill-opacity=".38"/><rect x="83" y="208" width="2" height="2" fill="#008000" fill-opacity=".38"/><rect x="86" y="208" width="4" height="2" fill="#008000" fill-opacity=".38"/><rect x="20" y="210" width="3" height="2" fill="#0000ff" fill-opacity=".38"/><rect x="24" y="210" width="14" height="2" fill="#000000" fill-opacity=".5"/><rect x="39" y="210" width="9" height="2" fill="#000000" fill-opacity=".5"/><rect x="49" y="210" width="10" height="2" fill="#000000" fill-opacity=".5"/><rect x="60" y="210" width="5" height="2" fill="#000000" fill-opacity=".5"/><rect x="20" y="212" width="10" height="2" fill="#000000" fill-opacity=".5"/><rect x="31" y="212" width="12" height="2" fill="#000000" fill-opacity=".5"/><rect x="44" y="212" width="8" height="2" fill="#000000" fill-opacity=".5"/><rect x="18" y="216" width="4" height="2" fill="#0000ff" fill-opacity=".38"/><rect x="23" y="216" width="1" height="2" fill="#7b3814" fill-opacity=".38"/><rect x="24" y="218" width="10" height="2" fill="#000000" fill-opacity=".5"/><rect x="35" y="218" width="8" height="2" fill="#000000" fill-opacity=".5"/><rect x="13" y="224" width="2" height="2" fill="#008000" fill-opacity=".38"/><rect x="16" y="224" width="7" height="2" fill="#008000" fill-opacity=".38"/><rect x="24" y="224" width="8" height="2" fill="#008000" fill-opacity=".38"/><rect x="33" y="224" width="8" height="2" fill="#008000" fill-opacity=".38"/><rect x="42" y="224" width="7" height="2" fill="#008000" fill-opacity=".38"/><rect x="50" y="224" width="4" height="2" fill="#008000" fill-opacity=".38"/><rect x="55" y="224" width="2" height="2" fill="#008000" fill-opacity=".38"/><rect x="58" y="224" width="5" height="2" fill="#008000" fill-opacity=".38"/><rect x="64" y="224" width="6" height="2" fill="#008000" fill-opacity=".38"/><rect x="71" y="224" width="4" height="2" fill="#008000" fill-opacity=".38"/><rect x="76" y="224" width="3" height="2" fill="#008000" fill-opacity=".38"/><rect x="80" y="224" width="1" height="2" fill="#008000" fill-opacity=".38"/><rect x="13" y="226" width="3" height="2" fill="#008000" fill-opacity=".38"/><rect x="17" y="226" width="6" height="2" fill="#008000" fill-opacity=".38"/><rect x="24" y="226" width="2" height="2" fill="#008000" fill-opacity=".38"/><rect x="27" y="226" width="4" height="2" fill="#008000" fill-opacity=".38"/><rect x="32" y="226" width="7" height="2" fill="#008000" fill-opacity=".38"/><rect x="40" y="226" width="3" height="2" fill="#008000" fill-opacity=".38"/><rect x="44" y="226" width="7" height="2" fill="#008000" fill-opacity=".38"/><rect x="52" y="226" width="6" height="2" fill="#008000" fill-opacity=".38"/><rect x="59" y="226" width="2" height="2" fill="#008000" fill-opacity=".38"/><rect x="62" y="226" width="3" height="2" fill="#008000" fill-opacity=".38"/><rect x="66" y="226" width="6" height="2" fill="#008000" fill-opacity=".38"/><rect x="73" y="226" width="6" height="2" fill="#008000" fill-opacity=".38"/><rect x="80" y="226" width="7" height="2" fill="#008000" fill-opacity=".38"/><rect x="16" y="230" width="2" height="2" fill="#0000ff" fill-opacity=".38"/><rect x="19" y="230" width="1" height="2" fill="#7b3814" fill-opacity=".38"/><rect x="21" y="230" width="8" height="2" fill="#000000" fill-opacity=".5"/><rect x="30" y="230" width="14" height="2" fill="#a31515" fill-opacity=".38"/><rect x="45" y="230" width="6" height="2" fill="#000000" fill-opacity=".5"/><rect x="18" y="232" width="3" height="2" fill="#0000ff" fill-opacity=".38"/><rect x="22" y="232" width="10" height="2" fill="#000000" fill-opacity=".5"/><rect x="33" y="232" width="12" height="2" fill="#000000" fill-opacity=".5"/><rect x="46" y="232" width="6" height="2" fill="#000000" fill-opacity=".5"/><rect x="18" y="234" width="12" height="2" fill="#000000" fill-opacity=".5"/><rect x="31" y="234" width="10" height="2" fill="#a31515" fill-opacity=".38"/><rect x="42" y="234" width="8" height="2" fill="#000000" fill-opacity=".5"/><rect x="18" y="236" width="2" height="2" fill="#0000ff" fill-opacity=".38"/><rect x="21" y="236" width="9" height="2" fill="#000000" fill-opacity=".5"/><rect x="31" y="236" width="10" height="2" fill="#000000" fill-opacity=".5"/><rect x="42" y="236" width="6" height="2" fill="#a31515" fill-opacity=".38"/><rect x="20" y="238" width="10" height="2" fill="#000000" fill-opacity=".5"/><rect x="31" y="238" width="12" height="2" fill="#000000" fill-opacity=".5"/><rect x="18" y="240" width="8" height="2" fill="#000000" fill-opacity=".5"/><rect x="27" y="240" width="4" height="2" fill="#0000ff" fill-opacity=".38"/><rect x="16" y="244" width="4" height="2" fill="#0000ff" fill-opacity=".38"/><rect x="21" y="244" width="1" height="2" fill="#7b3814" fill-opacity=".38"/><rect x="24" y="246" width="10" height="2" fill="#000000" fill-opacity=".5"/><rect x="35" y="246" width="8" height="2" fill="#000000" fill-opacity=".5"/><rect x="10" y="248" width="1" height="2" fill="#7b3814" fill-opacity=".38"/><rect x="8" y="250" width="1" height="2" fill="#319331" fill-opacity=".38"/><rect x="6" y="252" width="1" height="2" fill="#7b3814" fill-opacity=".38"/><rect x="4" y="254" width="1" height="2" fill="#319331" fill-opacity=".38"/><rect x="2" y="256" width="1" height="2" fill="#7b3814" fill-opacity=".38"/><rect x="0" y="258" width="1" height="2" fill="#319331" fill-opacity=".38"/><rect x="2" y="260" width="1" height="2" fill="#0431fa" fill-opacity=".38"/><rect x="4" y="260" width="5" height="2" fill="#0000ff" fill-opacity=".38"/><rect x="10" y="260" width="3" height="2" fill="#319331" fill-opacity=".38"/><rect x="14" y="260" width="1" height="2" fill="#0431fa" fill-opacity=".38"/><rect x="2" y="262" width="13" height="2" fill="#000000" fill-opacity=".5"/><rect x="16" y="262" width="14" height="2" fill="#a31515" fill-opacity=".38"/><rect x="31" y="262" width="2" height="2" fill="#000000" fill-opacity=".5"/><rect x="34" y="262" width="1" height="2" fill="#000000" fill-opacity=".5"/><rect x="2" y="264" width="6" height="2" fill="#0000ff" fill-opacity=".38"/><rect x="9" y="264" width="4" height="2" fill="#0000ff" fill-opacity=".38"/><rect x="14" y="264" width="1" height="2" fill="#000000" fill-opacity=".5"/></svg>
<div class="abs" style="left:1138px;top:0;width:14px;height:157.0px;background:rgba(100,100,100,.4)"></div>
</div>
<div class="abs" style="left:0;bottom:0;right:0;height:69px;background:#f9fafb;border-top:1px solid #e5e7eb">
<div class="c" style="right:16px;top:16px;width:60px;height:36px;background:#2563eb;border-radius:6px;color:#fff;font-size:14px">关闭</div>
</div></div>
</div></body></html>
